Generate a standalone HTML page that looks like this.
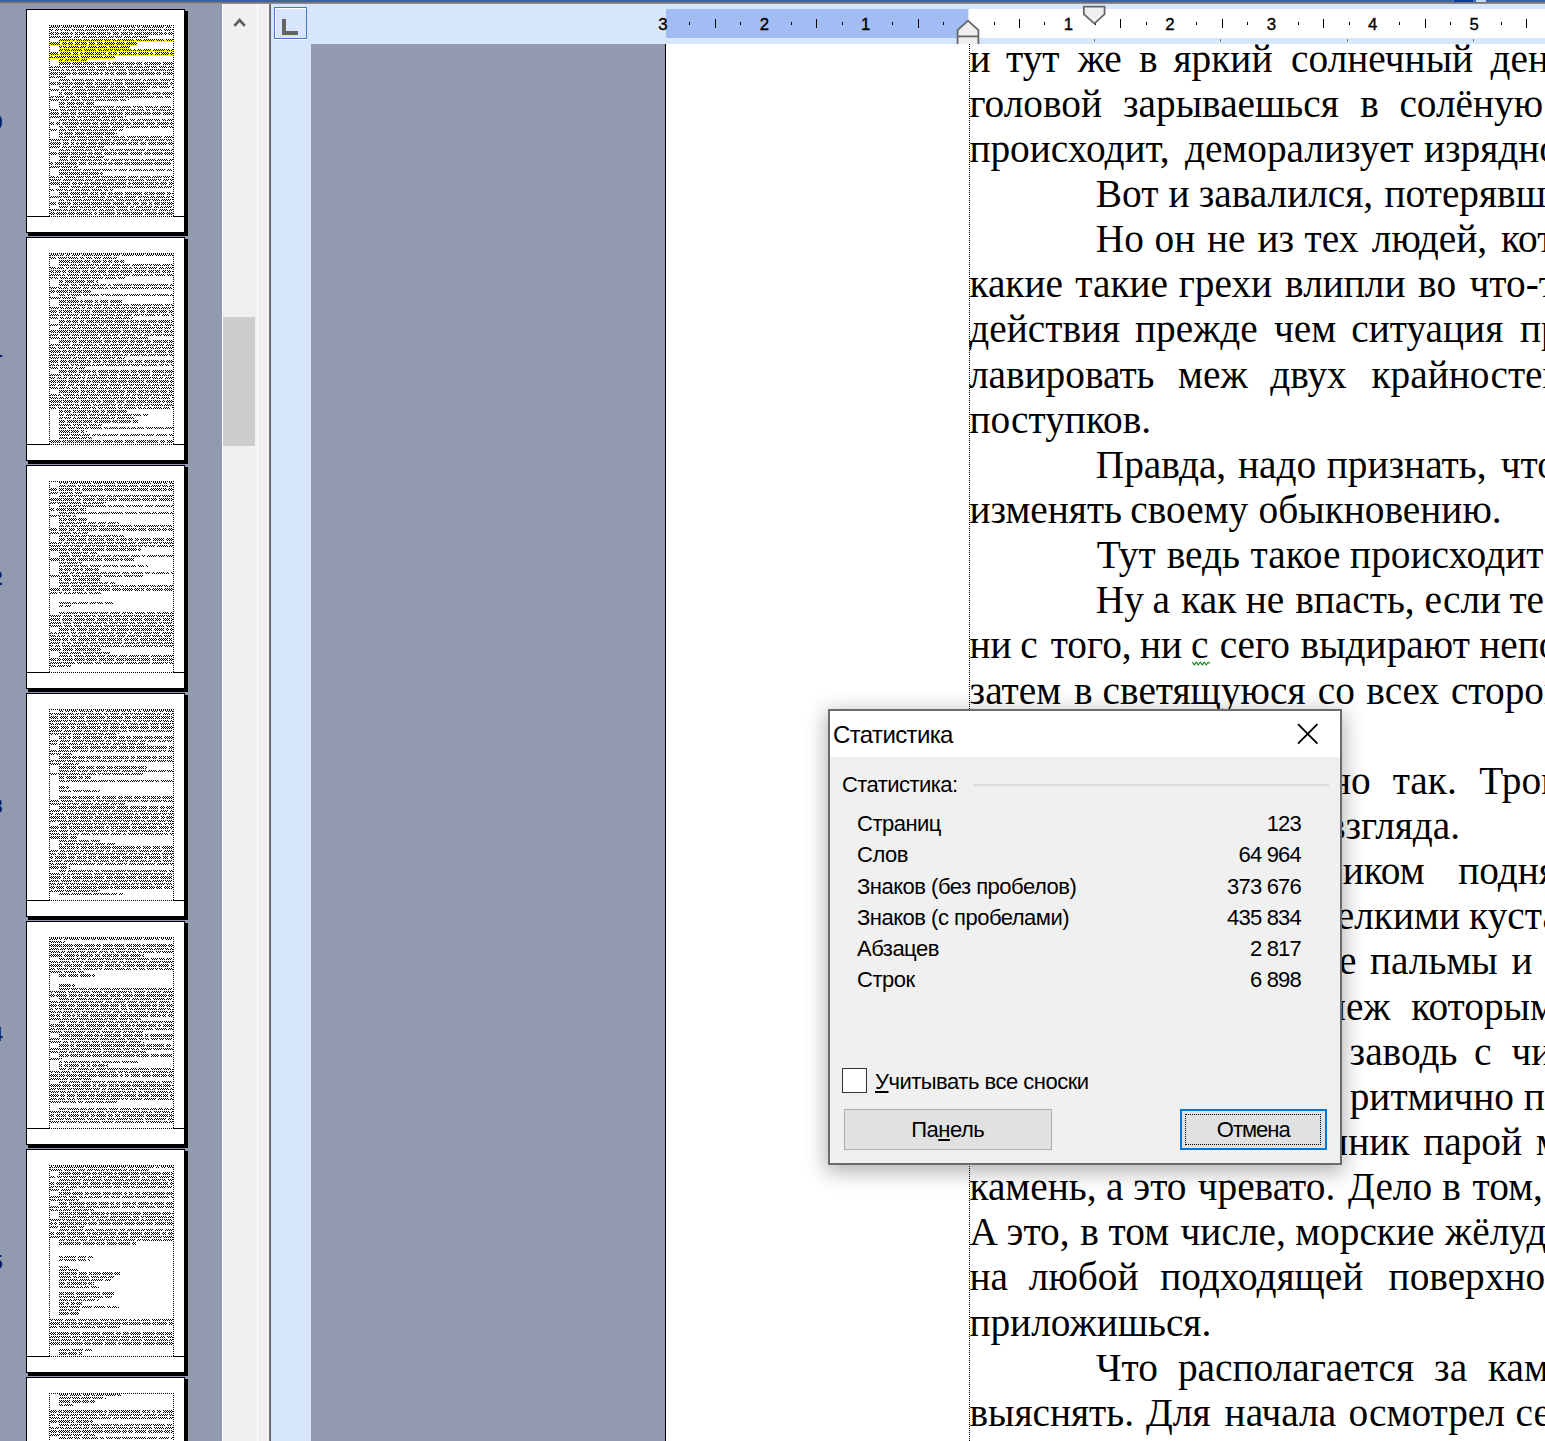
<!DOCTYPE html>
<html lang="ru">
<head>
<meta charset="utf-8">
<title>Статистика</title>
<style>
html,body{margin:0;padding:0}
body{width:1545px;height:1441px;position:relative;overflow:hidden;background:#fff;font-family:"Liberation Sans",sans-serif}
.abs{position:absolute}
#topbar{left:0;top:0;width:1545px;height:2px;background:#3d62a1}
#topline{left:0;top:2px;width:1545px;height:2px;background:linear-gradient(#6e6a68,#9a9896)}
#leftpane{left:0;top:4px;width:222px;height:1437px;background:#929aaf}
#vscroll{left:222px;top:4px;width:36px;height:1437px;background:#f0f0f0;border-left:1px solid #fff;box-sizing:border-box}
#vthumb{left:223px;top:317px;width:32px;height:129px;background:#cdcdcd}
#split{left:257px;top:4px;width:12px;height:1437px;background:#f0f0f0;border-left:1px solid #fff;box-sizing:border-box}
#splitline{left:269px;top:4px;width:2px;height:1437px;background:linear-gradient(to right,#8b8b8b,#555)}
#rulerbg{left:271px;top:4px;width:1274px;height:1437px;background:#d8e6fc}
#docbg{left:311px;top:44px;width:355px;height:1397px;background:#929aaf}
#page{left:665px;top:44px;width:880px;height:1397px;background:#fff;border-left:1px solid #000;box-sizing:border-box}
#rband{left:666px;top:9px;width:302px;height:29px;background:#a1bdf4}
#rwhite{left:969px;top:9px;width:576px;height:29px;background:#fff}
#tabsel{left:274px;top:7px;width:33px;height:32px;box-sizing:border-box;border:1px solid #4a78c8;box-shadow:inset 1px 1px 0 #fff,0 1px 0 #fff}
#textedge{left:969px;top:44px;width:1px;height:1397px;background:repeating-linear-gradient(to bottom,#000 0,#000 1px,#fff 1px,#fff 2px)}
svg{position:absolute;left:0;top:0;overflow:visible}
.rn{font-family:"Liberation Sans",sans-serif;font-size:16.8px;fill:#000;stroke:#000;stroke-width:.35px}
.ln{position:absolute;left:0;width:1545px;height:45.1px;white-space:pre;font-family:"Liberation Serif",serif;font-size:39.35px;line-height:45.1px;color:#000}
.ln span{position:absolute;top:0}
.pgn{position:absolute;left:-57.4px;width:60px;text-align:right;font-size:20px;line-height:24px;color:#0a1a5c;font-weight:bold}
/* dialog */
#dlg>*{margin:-.5px 0 0 -.5px}
#dlg{left:828px;top:709px;width:514px;height:456px;box-sizing:border-box;border:2px solid #6b6b6b;background:#f0f0f0;box-shadow:0 5px 20px 2px rgba(0,0,0,.3);font-size:22px;letter-spacing:-.5px;color:#000}
#dlg .title{position:absolute;left:0;top:0;right:0;height:46.5px;background:#fff}
#dlg .title span{position:absolute;left:3.5px;top:9.4px;font-size:24px;line-height:30px;letter-spacing:-.62px}
#dlg .grp{position:absolute;left:12.5px;top:60.3px;line-height:28px;letter-spacing:-.55px}
#dlg .sep{position:absolute;left:143px;top:73.5px;width:356px;height:1.5px;background:#dcdcdc}
#dlg .row{position:absolute;left:27.5px;width:444px;height:30px;line-height:30px;white-space:pre}
#dlg .row i{font-style:normal;position:absolute;right:0;top:0;letter-spacing:-.8px}
#dlg .cb{position:absolute;left:12.5px;top:357.3px;width:25px;height:25px;box-sizing:border-box;border:1.5px solid #333;background:#fff}
#dlg .cbl{position:absolute;left:45.5px;top:356px;line-height:30px;white-space:pre}
#dlg .btn{position:absolute;top:398px;height:41px;box-sizing:border-box;background:#e1e1e1;border:1px solid #adadad;text-align:center;line-height:40px}
#dlg .b1{left:14.5px;width:207.5px}
#dlg .b2{left:350.5px;width:146.5px;border:2px solid #0078d7;line-height:38px;letter-spacing:-1px}
#dlg .b2:after{content:"";position:absolute;left:3px;top:3px;right:3.5px;bottom:3px;border:1px dotted #000}
u{text-decoration:underline;text-underline-offset:2px;text-decoration-thickness:1.5px}
</style>
</head>
<body>
<div id="topbar" class="abs"></div>
<div id="topline" class="abs"></div>
<div class="abs" style="left:1452px;top:0;width:23px;height:2px;background:#0b3a97;border-left:2px solid #3f73c9;border-right:2px solid #3f73c9;box-sizing:border-box"></div>
<div class="abs" style="left:1476px;top:0;width:10px;height:2px;background:#c3d9f8"></div>
<div id="leftpane" class="abs"></div>
<div class="pgn" style="top:110px">110</div>
<div class="pgn" style="top:338px">111</div>
<div class="pgn" style="top:566px">112</div>
<div class="pgn" style="top:794px">113</div>
<div class="pgn" style="top:1022px">114</div>
<div class="pgn" style="top:1250px">115</div>
<div id="vscroll" class="abs"></div>
<div id="vthumb" class="abs"></div>
<div id="split" class="abs"></div>
<div id="splitline" class="abs"></div>
<div id="rulerbg" class="abs"></div>
<div id="docbg" class="abs"></div>
<div id="page" class="abs"></div>
<div id="rband" class="abs"></div>
<div id="rwhite" class="abs"></div>
<div id="tabsel" class="abs"></div>
<div id="textedge" class="abs"></div>
<svg width="1545" height="1441" viewBox="0 0 1545 1441">
<defs>
<pattern id="dt" width="2" height="2" patternUnits="userSpaceOnUse"><rect x="0" y="0" width="1" height="1" fill="#000"/><rect x="1" y="1" width="1" height="1" fill="#000"/></pattern>
</defs>
<!-- scrollbar up arrow -->
<path d="M234.4 25.8 L239.6 20 L244.8 25.8" fill="none" stroke="#5f5f5f" stroke-width="2.7"/>
<!-- tab selector L -->
<path d="M284 19 V33 H298" fill="none" stroke="#646464" stroke-width="4"/>
<rect x="689" y="22" width="1" height="3" fill="#000"/>
<rect x="715" y="19" width="1" height="9" fill="#000"/>
<rect x="740" y="22" width="1" height="3" fill="#000"/>
<rect x="791" y="22" width="1" height="3" fill="#000"/>
<rect x="816" y="19" width="1" height="9" fill="#000"/>
<rect x="842" y="22" width="1" height="3" fill="#000"/>
<rect x="892" y="22" width="1" height="3" fill="#000"/>
<rect x="918" y="19" width="1" height="9" fill="#000"/>
<rect x="943" y="22" width="1" height="3" fill="#000"/>
<rect x="994" y="22" width="1" height="3" fill="#000"/>
<rect x="1019" y="19" width="1" height="9" fill="#000"/>
<rect x="1044" y="22" width="1" height="3" fill="#000"/>
<rect x="1095" y="22" width="1" height="3" fill="#000"/>
<rect x="1120" y="19" width="1" height="9" fill="#000"/>
<rect x="1146" y="22" width="1" height="3" fill="#000"/>
<rect x="1196" y="22" width="1" height="3" fill="#000"/>
<rect x="1222" y="19" width="1" height="9" fill="#000"/>
<rect x="1247" y="22" width="1" height="3" fill="#000"/>
<rect x="1298" y="22" width="1" height="3" fill="#000"/>
<rect x="1323" y="19" width="1" height="9" fill="#000"/>
<rect x="1349" y="22" width="1" height="3" fill="#000"/>
<rect x="1399" y="22" width="1" height="3" fill="#000"/>
<rect x="1425" y="19" width="1" height="9" fill="#000"/>
<rect x="1450" y="22" width="1" height="3" fill="#000"/>
<rect x="1501" y="22" width="1" height="3" fill="#000"/>
<rect x="1526" y="19" width="1" height="9" fill="#000"/>
<text x="662.9" y="30.3" text-anchor="middle" class="rn">3</text>
<text x="764.3" y="30.3" text-anchor="middle" class="rn">2</text>
<text x="865.7" y="30.3" text-anchor="middle" class="rn">1</text>
<text x="1068.5" y="30.3" text-anchor="middle" class="rn">1</text>
<text x="1169.9" y="30.3" text-anchor="middle" class="rn">2</text>
<text x="1271.3" y="30.3" text-anchor="middle" class="rn">3</text>
<text x="1372.7" y="30.3" text-anchor="middle" class="rn">4</text>
<text x="1474.1" y="30.3" text-anchor="middle" class="rn">5</text>
<rect x="1094" y="39" width="1" height="3" fill="#7d7d7d"/>
<rect x="1220" y="39" width="1" height="3" fill="#7d7d7d"/>
<rect x="1347" y="39" width="1" height="3" fill="#7d7d7d"/>
<rect x="1473" y="39" width="1" height="3" fill="#7d7d7d"/>
<!-- first-line indent marker -->
<path d="M1083.8 6.6 H1104.6 V14.2 L1094.4 23.6 L1083.8 14.2 Z" fill="#efefef" stroke="#666" stroke-width="1.8"/>
<!-- hanging indent + left indent marker -->
<path d="M957.6 44 V30.2 L968 20.6 L978.4 30.2 V44" fill="#efefef" stroke="#666" stroke-width="1.8"/>
<path d="M957.6 36.4 H978.4" stroke="#666" stroke-width="1.8"/>
<g transform="translate(26,9)">
<rect x="2" y="2" width="160" height="225" fill="#000"/>
<rect x="0.5" y="0.5" width="158" height="223" fill="#fff" stroke="#000" stroke-width="1"/>
<rect x="0" y="207" width="24" height="1" fill="#000"/><rect x="147" y="207" width="12" height="1" fill="#000"/>
<path d="M23 16.5H148M23 207.5H148M23.5 16V208M147.5 16V208" fill="none" stroke="#000" stroke-width="1" stroke-dasharray="1 1"/>
<path d="M33 31h114v2h-114zM24 35h87v2h-87zM33 38h71v2h-71zM33 41h114v2h-114zM24 45h123v2h-123zM24 48h65v2h-65zM33 51h28v2h-28z" fill="#ff0"/>
<path d="M24 17h10v2h-10zM36 17h10v2h-10zM47 17h11v2h-11zM60 17h6v2h-6zM67 17h11v2h-11zM79 17h12v2h-12zM92 17h4v2h-4zM97 17h7v2h-7zM105 17h4v2h-4zM111 17h3v2h-3zM116 17h9v2h-9zM126 17h12v2h-12zM140 17h5v2h-5zM24 20h3v2h-3zM29 20h4v2h-4zM34 20h3v2h-3zM38 20h6v2h-6zM46 20h3v2h-3zM50 20h8v2h-8zM59 20h12v2h-12zM72 20h11v2h-11zM84 20h7v2h-7zM92 20h3v2h-3zM97 20h4v2h-4zM102 20h7v2h-7zM110 20h11v2h-11zM122 20h7v2h-7zM130 20h6v2h-6zM138 20h7v2h-7zM146 20h1v2h-1zM24 23h4v3h-4zM29 23h4v3h-4zM34 23h9v3h-9zM44 23h3v3h-3zM49 23h3v3h-3zM53 23h6v3h-6zM60 23h10v3h-10zM71 23h9v3h-9zM81 23h4v3h-4zM87 23h6v3h-6zM95 23h7v3h-7zM103 23h4v3h-4zM108 23h8v3h-8zM117 23h9v3h-9zM127 23h5v3h-5zM133 23h4v3h-4zM138 23h3v3h-3zM142 23h5v3h-5zM24 27h11v2h-11zM36 27h10v2h-10zM48 27h6v2h-6zM56 27h5v2h-5zM62 27h9v2h-9zM72 27h9v2h-9zM82 27h6v2h-6zM89 27h7v2h-7zM98 27h7v2h-7zM106 27h6v2h-6zM113 27h9v2h-9zM33 30h12v2h-12zM46 30h3v2h-3zM50 30h6v2h-6zM57 30h7v2h-7zM65 30h12v2h-12zM78 30h7v2h-7zM86 30h4v2h-4zM91 30h4v2h-4zM96 30h12v2h-12zM110 30h6v2h-6zM117 30h12v2h-12zM130 30h8v2h-8zM140 30h7v2h-7zM24 33h10v3h-10zM36 33h5v3h-5zM42 33h5v3h-5zM49 33h5v3h-5zM55 33h6v3h-6zM63 33h6v3h-6zM71 33h6v3h-6zM78 33h11v3h-11zM90 33h9v3h-9zM100 33h11v3h-11zM33 37h3v2h-3zM37 37h4v2h-4zM42 37h11v2h-11zM54 37h6v2h-6zM62 37h9v2h-9zM72 37h9v2h-9zM83 37h10v2h-10zM94 37h10v2h-10zM33 40h4v2h-4zM38 40h6v2h-6zM45 40h11v2h-11zM58 40h12v2h-12zM72 40h4v2h-4zM77 40h6v2h-6zM84 40h3v2h-3zM88 40h7v2h-7zM96 40h10v2h-10zM107 40h3v2h-3zM111 40h5v2h-5zM117 40h8v2h-8zM127 40h12v2h-12zM140 40h4v2h-4zM145 40h2v2h-2zM24 43h8v3h-8zM34 43h11v3h-11zM47 43h5v3h-5zM54 43h3v3h-3zM58 43h10v3h-10zM69 43h7v3h-7zM77 43h3v3h-3zM82 43h4v3h-4zM87 43h4v3h-4zM93 43h7v3h-7zM101 43h5v3h-5zM107 43h4v3h-4zM112 43h11v3h-11zM124 43h3v3h-3zM129 43h5v3h-5zM135 43h8v3h-8zM144 43h3v3h-3zM24 47h3v2h-3zM28 47h12v2h-12zM41 47h12v2h-12zM55 47h9v2h-9zM65 47h12v2h-12zM78 47h11v2h-11zM33 50h4v2h-4zM39 50h4v2h-4zM44 50h9v2h-9zM55 50h6v2h-6zM33 53h12v3h-12zM46 53h10v3h-10zM57 53h11v3h-11zM69 53h11v3h-11zM82 53h3v3h-3zM86 53h12v3h-12zM99 53h10v3h-10zM110 53h6v3h-6zM118 53h4v3h-4zM123 53h12v3h-12zM137 53h10v3h-10zM24 57h3v2h-3zM28 57h7v2h-7zM36 57h12v2h-12zM49 57h11v2h-11zM61 57h8v2h-8zM71 57h10v2h-10zM82 57h6v2h-6zM89 57h9v2h-9zM100 57h7v2h-7zM108 57h9v2h-9zM118 57h6v2h-6zM125 57h6v2h-6zM133 57h8v2h-8zM142 57h5v2h-5zM24 60h10v2h-10zM35 60h3v2h-3zM40 60h4v2h-4zM45 60h5v2h-5zM51 60h10v2h-10zM62 60h7v2h-7zM70 60h9v2h-9zM80 60h11v2h-11zM92 60h8v2h-8zM102 60h12v2h-12zM115 60h8v2h-8zM124 60h3v2h-3zM128 60h12v2h-12zM141 60h6v2h-6zM24 63h8v3h-8zM33 63h12v3h-12zM46 63h5v3h-5zM52 63h10v3h-10zM63 63h3v3h-3zM67 63h6v3h-6zM74 63h3v3h-3zM79 63h4v3h-4zM84 63h4v3h-4zM90 63h11v3h-11zM103 63h8v3h-8zM112 63h6v3h-6zM119 63h10v3h-10zM130 63h5v3h-5zM137 63h3v3h-3zM141 63h6v3h-6zM24 67h5v2h-5zM30 67h7v2h-7zM38 67h2v2h-2zM33 70h11v2h-11zM46 70h12v2h-12zM59 70h9v2h-9zM70 70h6v2h-6zM77 70h9v2h-9zM88 70h9v2h-9zM98 70h10v2h-10zM109 70h6v2h-6zM117 70h3v2h-3zM121 70h11v2h-11zM134 70h11v2h-11zM146 70h1v2h-1zM24 73h6v3h-6zM31 73h4v3h-4zM36 73h6v3h-6zM43 73h4v3h-4zM48 73h11v3h-11zM60 73h7v3h-7zM69 73h3v3h-3zM73 73h11v3h-11zM85 73h3v3h-3zM89 73h8v3h-8zM99 73h9v3h-9zM109 73h10v3h-10zM120 73h6v3h-6zM127 73h9v3h-9zM137 73h5v3h-5zM144 73h3v3h-3zM33 77h5v2h-5zM39 77h5v2h-5zM46 77h11v2h-11zM59 77h10v2h-10zM70 77h12v2h-12zM84 77h4v2h-4zM89 77h10v2h-10zM101 77h11v2h-11zM113 77h11v2h-11zM126 77h5v2h-5zM133 77h11v2h-11zM146 77h1v2h-1zM24 80h9v2h-9zM35 80h6v2h-6zM42 80h5v2h-5zM49 80h11v2h-11zM61 80h12v2h-12zM74 80h6v2h-6zM81 80h11v2h-11zM93 80h11v2h-11zM105 80h12v2h-12zM118 80h3v2h-3zM33 83h3v3h-3zM38 83h9v3h-9zM49 83h12v3h-12zM62 83h10v3h-10zM73 83h5v3h-5zM79 83h11v3h-11zM91 83h9v3h-9zM101 83h7v3h-7zM109 83h10v3h-10zM120 83h5v3h-5zM126 83h9v3h-9zM136 83h11v3h-11zM24 87h4v2h-4zM29 87h9v2h-9zM40 87h3v2h-3zM44 87h5v2h-5zM51 87h3v2h-3zM55 87h6v2h-6zM62 87h6v2h-6zM69 87h7v2h-7zM77 87h8v2h-8zM86 87h12v2h-12zM99 87h4v2h-4zM104 87h12v2h-12zM117 87h11v2h-11zM130 87h7v2h-7zM139 87h6v2h-6zM24 90h9v2h-9zM34 90h9v2h-9zM45 90h9v2h-9zM56 90h12v2h-12zM69 90h11v2h-11zM81 90h11v2h-11zM94 90h6v2h-6zM102 90h1v2h-1zM33 93h6v3h-6zM41 93h8v3h-8zM50 93h8v3h-8zM60 93h8v3h-8zM33 97h6v2h-6zM40 97h4v2h-4zM45 97h6v2h-6zM52 97h4v2h-4zM57 97h9v2h-9zM67 97h9v2h-9zM77 97h11v2h-11zM90 97h5v2h-5zM96 97h9v2h-9zM107 97h3v2h-3zM111 97h6v2h-6zM119 97h8v2h-8zM128 97h4v2h-4zM134 97h11v2h-11zM24 100h8v2h-8zM34 100h6v2h-6zM41 100h10v2h-10zM52 100h3v2h-3zM56 100h11v2h-11zM69 100h11v2h-11zM82 100h10v2h-10zM93 100h6v2h-6zM100 100h4v2h-4zM105 100h5v2h-5zM111 100h7v2h-7zM120 100h4v2h-4zM126 100h3v2h-3zM130 100h10v2h-10zM141 100h4v2h-4zM146 100h1v2h-1zM24 103h9v3h-9zM35 103h8v3h-8zM44 103h6v3h-6zM52 103h8v3h-8zM61 103h3v3h-3zM65 103h5v3h-5zM71 103h10v3h-10zM82 103h8v3h-8zM91 103h6v3h-6zM99 103h5v3h-5zM105 103h11v3h-11zM117 103h8v3h-8zM126 103h9v3h-9zM137 103h10v3h-10zM24 107h12v2h-12zM37 107h7v2h-7zM45 107h4v2h-4zM51 107h5v2h-5zM57 107h5v2h-5zM63 107h11v2h-11zM76 107h8v2h-8zM85 107h5v2h-5zM91 107h6v2h-6zM99 107h1v2h-1zM33 110h8v2h-8zM42 110h10v2h-10zM53 110h3v2h-3zM57 110h12v2h-12zM70 110h6v2h-6zM77 110h7v2h-7zM85 110h6v2h-6zM93 110h9v2h-9zM104 110h5v2h-5zM111 110h4v2h-4zM116 110h11v2h-11zM128 110h6v2h-6zM136 110h4v2h-4zM141 110h6v2h-6zM24 113h4v3h-4zM30 113h4v3h-4zM36 113h6v3h-6zM43 113h10v3h-10zM54 113h11v3h-11zM66 113h6v3h-6zM74 113h9v3h-9zM84 113h4v3h-4zM89 113h7v3h-7zM97 113h8v3h-8zM107 113h11v3h-11zM120 113h9v3h-9zM131 113h12v3h-12zM144 113h3v3h-3zM33 117h4v2h-4zM39 117h12v2h-12zM53 117h3v2h-3zM57 117h5v2h-5zM63 117h10v2h-10zM74 117h10v2h-10zM86 117h12v2h-12zM100 117h3v2h-3zM104 117h10v2h-10zM115 117h7v2h-7zM124 117h9v2h-9zM135 117h7v2h-7zM143 117h4v2h-4zM24 120h7v2h-7zM33 120h7v2h-7zM42 120h7v2h-7zM50 120h3v2h-3zM54 120h12v2h-12zM67 120h5v2h-5zM73 120h9v2h-9zM83 120h8v2h-8zM93 120h4v2h-4zM33 123h4v3h-4zM38 123h9v3h-9zM49 123h10v3h-10zM60 123h6v3h-6zM67 123h11v3h-11zM79 123h10v3h-10zM90 123h1v3h-1zM33 127h4v2h-4zM38 127h12v2h-12zM51 127h10v2h-10zM62 127h6v2h-6zM69 127h8v2h-8zM79 127h5v2h-5zM85 127h8v2h-8zM94 127h5v2h-5zM101 127h9v2h-9zM111 127h12v2h-12zM124 127h12v2h-12zM138 127h9v2h-9zM24 130h11v2h-11zM36 130h7v2h-7zM45 130h5v2h-5zM51 130h10v2h-10zM62 130h11v2h-11zM74 130h11v2h-11zM87 130h8v2h-8zM96 130h7v2h-7zM105 130h12v2h-12zM119 130h12v2h-12zM132 130h7v2h-7zM140 130h6v2h-6zM24 133h11v3h-11zM37 133h6v3h-6zM45 133h3v3h-3zM50 133h3v3h-3zM54 133h7v3h-7zM62 133h9v3h-9zM72 133h12v3h-12zM85 133h4v3h-4zM90 133h11v3h-11zM102 133h4v3h-4zM107 133h5v3h-5zM114 133h6v3h-6zM122 133h8v3h-8zM131 133h10v3h-10zM142 133h5v3h-5zM24 137h10v2h-10zM36 137h5v2h-5zM42 137h4v2h-4zM47 137h12v2h-12zM60 137h10v2h-10zM71 137h7v2h-7zM33 140h5v2h-5zM39 140h5v2h-5zM46 140h12v2h-12zM59 140h7v2h-7zM68 140h5v2h-5zM74 140h8v2h-8zM84 140h4v2h-4zM89 140h8v2h-8zM98 140h11v2h-11zM110 140h9v2h-9zM121 140h12v2h-12zM134 140h10v2h-10zM145 140h2v2h-2zM24 143h7v3h-7zM32 143h12v3h-12zM45 143h7v3h-7zM53 143h8v3h-8zM62 143h5v3h-5zM68 143h8v3h-8zM78 143h8v3h-8zM87 143h4v3h-4zM92 143h10v3h-10zM104 143h12v3h-12zM118 143h7v3h-7zM126 143h11v3h-11zM138 143h9v3h-9zM33 147h9v2h-9zM44 147h11v2h-11zM56 147h4v2h-4zM61 147h8v2h-8zM70 147h8v2h-8zM33 150h9v2h-9zM44 150h9v2h-9zM54 150h12v2h-12zM67 150h9v2h-9zM78 150h5v2h-5zM85 150h12v2h-12zM98 150h5v2h-5zM104 150h10v2h-10zM115 150h3v2h-3zM119 150h11v2h-11zM131 150h11v2h-11zM143 150h4v2h-4zM24 153h3v3h-3zM29 153h9v3h-9zM39 153h12v3h-12zM53 153h7v3h-7zM62 153h4v3h-4zM67 153h4v3h-4zM72 153h4v3h-4zM77 153h4v3h-4zM82 153h5v3h-5zM88 153h9v3h-9zM98 153h6v3h-6zM105 153h11v3h-11zM117 153h10v3h-10zM128 153h8v3h-8zM137 153h8v3h-8zM24 157h10v2h-10zM35 157h11v2h-11zM48 157h4v2h-4zM33 160h12v2h-12zM46 160h9v2h-9zM57 160h8v2h-8zM66 160h9v2h-9zM76 160h10v2h-10zM88 160h3v2h-3zM93 160h8v2h-8zM103 160h3v2h-3zM107 160h9v2h-9zM117 160h5v2h-5zM123 160h5v2h-5zM130 160h9v2h-9zM141 160h5v2h-5zM33 163h9v3h-9zM43 163h11v3h-11zM55 163h7v3h-7zM63 163h10v3h-10zM74 163h3v3h-3zM24 167h5v2h-5zM30 167h3v2h-3zM34 167h3v2h-3zM39 167h10v2h-10zM50 167h8v2h-8zM59 167h6v2h-6zM66 167h8v2h-8zM75 167h12v2h-12zM88 167h12v2h-12zM102 167h10v2h-10zM114 167h11v2h-11zM126 167h10v2h-10zM137 167h7v2h-7zM145 167h2v2h-2zM24 170h11v2h-11zM37 170h10v2h-10zM48 170h10v2h-10zM59 170h8v2h-8zM69 170h11v2h-11zM81 170h10v2h-10zM92 170h9v2h-9zM102 170h6v2h-6zM109 170h9v2h-9zM120 170h11v2h-11zM132 170h3v2h-3zM137 170h6v2h-6zM144 170h3v2h-3zM24 173h10v3h-10zM35 173h9v3h-9zM46 173h5v3h-5zM52 173h5v3h-5zM58 173h5v3h-5zM64 173h11v3h-11zM76 173h12v3h-12zM89 173h11v3h-11zM102 173h3v3h-3zM106 173h12v3h-12zM119 173h3v3h-3zM123 173h5v3h-5zM129 173h4v3h-4zM134 173h7v3h-7zM143 173h4v3h-4zM33 177h10v2h-10zM45 177h10v2h-10zM56 177h12v2h-12zM70 177h11v2h-11zM82 177h3v2h-3zM86 177h9v2h-9zM96 177h4v2h-4zM101 177h6v2h-6zM108 177h11v2h-11zM120 177h11v2h-11zM132 177h5v2h-5zM138 177h8v2h-8zM24 180h4v2h-4zM30 180h7v2h-7zM38 180h4v2h-4zM43 180h4v2h-4zM49 180h5v2h-5zM55 180h9v2h-9zM66 180h10v2h-10zM78 180h4v2h-4zM84 180h3v2h-3zM33 183h9v3h-9zM44 183h10v3h-10zM55 183h7v3h-7zM64 183h4v3h-4zM69 183h3v3h-3zM74 183h6v3h-6zM82 183h5v3h-5zM88 183h9v3h-9zM99 183h7v3h-7zM107 183h9v3h-9zM118 183h4v3h-4zM123 183h6v3h-6zM130 183h9v3h-9zM141 183h4v3h-4zM146 183h1v3h-1zM24 187h12v2h-12zM37 187h8v2h-8zM46 187h9v2h-9zM56 187h4v2h-4zM61 187h12v2h-12zM74 187h5v2h-5zM81 187h5v2h-5zM87 187h6v2h-6zM94 187h3v2h-3zM98 187h12v2h-12zM112 187h4v2h-4zM117 187h6v2h-6zM124 187h5v2h-5zM130 187h9v2h-9zM140 187h4v2h-4zM145 187h2v2h-2zM33 190h5v2h-5zM40 190h6v2h-6zM47 190h9v2h-9zM57 190h8v2h-8zM66 190h12v2h-12zM79 190h9v2h-9zM90 190h8v2h-8zM99 190h12v2h-12zM113 190h3v2h-3zM117 190h8v2h-8zM126 190h8v2h-8zM135 190h10v2h-10zM146 190h1v2h-1zM24 193h6v3h-6zM32 193h8v3h-8zM41 193h4v3h-4zM47 193h5v3h-5zM53 193h11v3h-11zM65 193h11v3h-11zM77 193h8v3h-8zM87 193h11v3h-11zM100 193h5v3h-5zM107 193h6v3h-6zM115 193h6v3h-6zM123 193h3v3h-3zM128 193h6v3h-6zM135 193h5v3h-5zM141 193h6v3h-6zM33 197h9v2h-9zM44 197h8v2h-8zM53 197h4v2h-4zM58 197h7v2h-7zM66 197h4v2h-4zM71 197h5v2h-5zM77 197h12v2h-12zM91 197h11v2h-11zM104 197h4v2h-4zM110 197h7v2h-7zM118 197h8v2h-8zM128 197h5v2h-5zM134 197h3v2h-3zM138 197h8v2h-8zM24 200h12v2h-12zM37 200h5v2h-5zM43 200h12v2h-12zM57 200h4v2h-4zM62 200h3v2h-3zM66 200h5v2h-5zM73 200h5v2h-5zM79 200h9v2h-9zM90 200h12v2h-12zM104 200h3v2h-3zM108 200h6v2h-6zM115 200h10v2h-10zM126 200h5v2h-5zM133 200h9v2h-9zM143 200h4v2h-4zM24 203h5v3h-5zM30 203h11v3h-11zM42 203h7v3h-7zM50 203h12v3h-12zM63 203h3v3h-3zM68 203h3v3h-3zM73 203h5v3h-5zM79 203h10v3h-10zM91 203h4v3h-4zM96 203h8v3h-8zM105 203h12v3h-12zM119 203h12v3h-12zM132 203h7v3h-7zM140 203h7v3h-7z" fill="url(#dt)"/>
</g>
<g transform="translate(26,237)">
<rect x="2" y="2" width="160" height="225" fill="#000"/>
<rect x="0.5" y="0.5" width="158" height="223" fill="#fff" stroke="#000" stroke-width="1"/>
<rect x="0" y="207" width="24" height="1" fill="#000"/><rect x="147" y="207" width="12" height="1" fill="#000"/>
<path d="M23 16.5H148M23 207.5H148M23.5 16V208M147.5 16V208" fill="none" stroke="#000" stroke-width="1" stroke-dasharray="1 1"/>
<path d="M24 17h9v2h-9zM34 17h4v2h-4zM40 17h4v2h-4zM46 17h8v2h-8zM56 17h11v2h-11zM68 17h9v2h-9zM78 17h8v2h-8zM87 17h7v2h-7zM96 17h12v2h-12zM109 17h9v2h-9zM120 17h8v2h-8zM129 17h12v2h-12zM142 17h5v2h-5zM24 20h6v2h-6zM32 20h9v2h-9zM42 20h10v2h-10zM54 20h4v2h-4zM60 20h6v2h-6zM68 20h7v2h-7zM77 20h9v2h-9zM87 20h4v2h-4zM33 23h11v3h-11zM45 23h12v3h-12zM58 23h6v3h-6zM66 23h9v3h-9zM77 23h4v3h-4zM82 23h4v3h-4zM88 23h5v3h-5zM94 23h4v3h-4zM33 27h10v2h-10zM44 27h7v2h-7zM52 27h7v2h-7zM60 27h8v2h-8zM69 27h4v2h-4zM74 27h10v2h-10zM86 27h9v2h-9zM96 27h8v2h-8zM106 27h12v2h-12zM119 27h3v2h-3zM123 27h3v2h-3zM127 27h8v2h-8zM136 27h8v2h-8zM145 27h2v2h-2zM24 30h6v2h-6zM31 30h7v2h-7zM40 30h3v2h-3zM44 30h8v2h-8zM53 30h10v2h-10zM64 30h5v2h-5zM71 30h11v2h-11zM83 30h11v2h-11zM96 30h6v2h-6zM103 30h3v2h-3zM108 30h4v2h-4zM113 30h8v2h-8zM122 30h9v2h-9zM133 30h5v2h-5zM139 30h8v2h-8zM24 33h4v3h-4zM29 33h6v3h-6zM36 33h4v3h-4zM42 33h6v3h-6zM49 33h5v3h-5zM56 33h6v3h-6zM64 33h7v3h-7zM72 33h8v3h-8zM82 33h11v3h-11zM94 33h12v3h-12zM108 33h6v3h-6zM115 33h5v3h-5zM122 33h6v3h-6zM129 33h5v3h-5zM136 33h4v3h-4zM141 33h4v3h-4zM146 33h1v3h-1zM24 37h11v2h-11zM36 37h3v2h-3zM41 37h12v2h-12zM54 37h11v2h-11zM66 37h9v2h-9zM77 37h4v2h-4zM82 37h7v2h-7zM90 37h6v2h-6zM97 37h7v2h-7zM106 37h11v2h-11zM118 37h5v2h-5zM124 37h3v2h-3zM129 37h10v2h-10zM141 37h6v2h-6zM24 40h3v2h-3zM28 40h4v2h-4zM34 40h8v2h-8zM43 40h10v2h-10zM54 40h11v2h-11zM66 40h11v2h-11zM79 40h11v2h-11zM92 40h7v2h-7zM33 43h4v3h-4zM39 43h9v3h-9zM49 43h10v3h-10zM61 43h7v3h-7zM70 43h2v3h-2zM33 47h10v2h-10zM45 47h6v2h-6zM53 47h12v2h-12zM66 47h7v2h-7zM74 47h6v2h-6zM82 47h3v2h-3zM87 47h10v2h-10zM98 47h8v2h-8zM107 47h12v2h-12zM120 47h12v2h-12zM133 47h9v2h-9zM144 47h3v2h-3zM24 50h7v2h-7zM32 50h4v2h-4zM37 50h5v2h-5zM44 50h11v2h-11zM57 50h6v2h-6zM65 50h5v2h-5zM71 50h7v2h-7zM79 50h3v2h-3zM84 50h8v2h-8zM94 50h11v2h-11zM106 50h12v2h-12zM119 50h4v2h-4zM125 50h11v2h-11zM137 50h9v2h-9zM24 53h5v3h-5zM30 53h12v3h-12zM43 53h3v3h-3zM47 53h9v3h-9zM57 53h8v3h-8zM33 57h6v2h-6zM41 57h3v2h-3zM45 57h10v2h-10zM57 57h5v2h-5zM63 57h10v2h-10zM75 57h3v2h-3zM79 57h6v2h-6zM86 57h11v2h-11zM98 57h4v2h-4zM103 57h11v2h-11zM115 57h10v2h-10zM126 57h4v2h-4zM131 57h12v2h-12zM144 57h3v2h-3zM24 60h11v2h-11zM36 60h9v2h-9zM46 60h4v2h-4zM33 63h7v3h-7zM41 63h12v3h-12zM54 63h3v3h-3zM58 63h9v3h-9zM69 63h3v3h-3zM74 63h8v3h-8zM84 63h12v3h-12zM33 67h10v2h-10zM44 67h6v2h-6zM51 67h9v2h-9zM61 67h6v2h-6zM68 67h8v2h-8zM77 67h5v2h-5zM84 67h5v2h-5zM90 67h6v2h-6zM97 67h6v2h-6zM105 67h10v2h-10zM116 67h10v2h-10zM127 67h10v2h-10zM139 67h5v2h-5zM145 67h2v2h-2zM24 70h9v2h-9zM34 70h4v2h-4zM39 70h7v2h-7zM47 70h7v2h-7zM56 70h3v2h-3zM61 70h5v2h-5zM68 70h7v2h-7zM77 70h9v2h-9zM88 70h6v2h-6zM95 70h4v2h-4zM100 70h3v2h-3zM104 70h8v2h-8zM113 70h6v2h-6zM121 70h4v2h-4zM126 70h8v2h-8zM135 70h10v2h-10zM146 70h1v2h-1zM24 73h7v3h-7zM33 73h3v3h-3zM37 73h9v3h-9zM48 73h6v3h-6zM55 73h3v3h-3zM59 73h5v3h-5zM66 73h12v3h-12zM79 73h3v3h-3zM83 73h7v3h-7zM91 73h9v3h-9zM101 73h11v3h-11zM114 73h5v3h-5zM121 73h11v3h-11zM133 73h8v3h-8zM143 73h4v3h-4zM24 77h9v2h-9zM34 77h6v2h-6zM41 77h11v2h-11zM54 77h10v2h-10zM65 77h5v2h-5zM71 77h11v2h-11zM83 77h6v2h-6zM90 77h7v2h-7zM98 77h8v2h-8zM108 77h6v2h-6zM115 77h3v2h-3zM119 77h10v2h-10zM131 77h3v2h-3zM136 77h7v2h-7zM145 77h2v2h-2zM24 80h8v2h-8zM34 80h4v2h-4zM39 80h6v2h-6zM47 80h7v2h-7zM55 80h9v2h-9zM65 80h9v2h-9zM75 80h3v2h-3zM79 80h9v2h-9zM89 80h7v2h-7zM97 80h7v2h-7zM105 80h2v2h-2zM33 83h6v3h-6zM40 83h5v3h-5zM46 83h6v3h-6zM54 83h4v3h-4zM60 83h8v3h-8zM69 83h5v3h-5zM75 83h12v3h-12zM88 83h11v3h-11zM100 83h3v3h-3zM104 83h4v3h-4zM109 83h4v3h-4zM114 83h7v3h-7zM122 83h9v3h-9zM132 83h12v3h-12zM145 83h2v3h-2zM24 87h8v2h-8zM33 87h4v2h-4zM38 87h3v2h-3zM42 87h8v2h-8zM51 87h12v2h-12zM64 87h7v2h-7zM73 87h5v2h-5zM80 87h10v2h-10zM91 87h12v2h-12zM104 87h8v2h-8zM113 87h12v2h-12zM127 87h6v2h-6zM134 87h3v2h-3zM139 87h8v2h-8zM33 90h12v2h-12zM46 90h4v2h-4zM51 90h4v2h-4zM56 90h10v2h-10zM67 90h9v2h-9zM77 90h5v2h-5zM84 90h11v2h-11zM96 90h7v2h-7zM104 90h8v2h-8zM113 90h3v2h-3zM117 90h12v2h-12zM130 90h7v2h-7zM138 90h7v2h-7zM24 93h6v3h-6zM31 93h11v3h-11zM43 93h11v3h-11zM55 93h3v3h-3zM59 93h11v3h-11zM71 93h11v3h-11zM83 93h12v3h-12zM97 93h8v3h-8zM106 93h8v3h-8zM115 93h3v3h-3zM119 93h6v3h-6zM127 93h9v3h-9zM138 93h5v3h-5zM144 93h3v3h-3zM24 97h8v2h-8zM34 97h10v2h-10zM46 97h7v2h-7zM54 97h9v2h-9zM64 97h8v2h-8zM74 97h11v2h-11zM86 97h6v2h-6zM94 97h6v2h-6zM101 97h8v2h-8zM111 97h5v2h-5zM118 97h5v2h-5zM124 97h4v2h-4zM129 97h7v2h-7zM137 97h10v2h-10zM24 100h10v2h-10zM35 100h5v2h-5zM42 100h9v2h-9zM52 100h3v2h-3zM56 100h7v2h-7zM64 100h11v2h-11zM77 100h9v2h-9zM87 100h7v2h-7zM95 100h8v2h-8zM104 100h8v2h-8zM113 100h9v2h-9zM33 103h12v3h-12zM46 103h5v3h-5zM53 103h7v3h-7zM61 103h5v3h-5zM67 103h9v3h-9zM78 103h7v3h-7zM86 103h5v3h-5zM92 103h10v3h-10zM104 103h5v3h-5zM110 103h7v3h-7zM118 103h7v3h-7zM127 103h9v3h-9zM137 103h5v3h-5zM143 103h4v3h-4zM24 107h4v2h-4zM29 107h6v2h-6zM36 107h8v2h-8zM46 107h11v2h-11zM58 107h9v2h-9zM68 107h3v2h-3zM73 107h10v2h-10zM84 107h8v2h-8zM93 107h7v2h-7zM101 107h7v2h-7zM109 107h9v2h-9zM120 107h12v2h-12zM133 107h5v2h-5zM140 107h7v2h-7zM24 110h6v2h-6zM32 110h7v2h-7zM40 110h10v2h-10zM51 110h4v2h-4zM57 110h7v2h-7zM65 110h9v2h-9zM75 110h5v2h-5zM81 110h3v2h-3zM85 110h12v2h-12zM99 110h5v2h-5zM105 110h9v2h-9zM115 110h8v2h-8zM124 110h4v2h-4zM129 110h6v2h-6zM136 110h11v2h-11zM24 113h11v3h-11zM36 113h5v3h-5zM42 113h3v3h-3zM46 113h4v3h-4zM51 113h5v3h-5zM57 113h10v3h-10zM68 113h6v3h-6zM75 113h10v3h-10zM86 113h9v3h-9zM96 113h11v3h-11zM108 113h11v3h-11zM120 113h6v3h-6zM128 113h12v3h-12zM142 113h5v3h-5zM24 117h7v2h-7zM32 117h7v2h-7zM40 117h10v2h-10zM52 117h3v2h-3zM56 117h3v2h-3zM60 117h11v2h-11zM72 117h4v2h-4zM77 117h8v2h-8zM86 117h11v2h-11zM98 117h4v2h-4zM104 117h10v2h-10zM115 117h6v2h-6zM122 117h8v2h-8zM131 117h11v2h-11zM143 117h4v2h-4zM24 120h9v2h-9zM34 120h11v2h-11zM47 120h4v2h-4zM52 120h9v2h-9zM63 120h9v2h-9zM73 120h12v2h-12zM86 120h3v2h-3zM91 120h5v2h-5zM97 120h2v2h-2zM24 123h8v3h-8zM34 123h7v3h-7zM42 123h10v3h-10zM53 123h7v3h-7zM61 123h4v3h-4zM67 123h8v3h-8zM77 123h4v3h-4zM82 123h8v3h-8zM91 123h5v3h-5zM97 123h3v3h-3zM102 123h5v3h-5zM109 123h7v3h-7zM118 123h6v3h-6zM125 123h8v3h-8zM134 123h5v3h-5zM140 123h7v3h-7zM24 127h5v2h-5zM30 127h3v2h-3zM34 127h9v2h-9zM45 127h3v2h-3zM49 127h4v2h-4zM54 127h11v2h-11zM66 127h3v2h-3zM70 127h8v2h-8zM79 127h12v2h-12zM92 127h12v2h-12zM105 127h9v2h-9zM115 127h6v2h-6zM122 127h9v2h-9zM133 127h5v2h-5zM139 127h4v2h-4zM145 127h2v2h-2zM24 130h8v2h-8zM34 130h3v2h-3zM38 130h9v2h-9zM49 130h3v2h-3zM53 130h6v2h-6zM33 133h8v3h-8zM42 133h9v3h-9zM53 133h12v3h-12zM66 133h4v3h-4zM72 133h10v3h-10zM83 133h10v3h-10zM94 133h9v3h-9zM105 133h6v3h-6zM112 133h12v3h-12zM126 133h12v3h-12zM139 133h8v3h-8zM24 137h11v2h-11zM37 137h10v2h-10zM48 137h7v2h-7zM57 137h3v2h-3zM62 137h3v2h-3zM66 137h5v2h-5zM73 137h10v2h-10zM84 137h7v2h-7zM93 137h12v2h-12zM106 137h6v2h-6zM114 137h10v2h-10zM126 137h9v2h-9zM136 137h5v2h-5zM142 137h4v2h-4zM24 140h5v2h-5zM31 140h5v2h-5zM37 140h4v2h-4zM43 140h7v2h-7zM51 140h4v2h-4zM56 140h3v2h-3zM61 140h8v2h-8zM70 140h11v2h-11zM82 140h10v2h-10zM93 140h11v2h-11zM105 140h9v2h-9zM115 140h10v2h-10zM126 140h6v2h-6zM133 140h4v2h-4zM139 140h8v2h-8zM24 143h6v3h-6zM31 143h10v3h-10zM42 143h11v3h-11zM54 143h5v3h-5zM60 143h5v3h-5zM66 143h8v3h-8zM75 143h8v3h-8zM84 143h7v3h-7zM92 143h9v3h-9zM102 143h12v3h-12zM115 143h3v3h-3zM120 143h12v3h-12zM133 143h10v3h-10zM144 143h3v3h-3zM24 147h6v2h-6zM32 147h8v2h-8zM42 147h6v2h-6zM50 147h9v2h-9zM60 147h3v2h-3zM64 147h8v2h-8zM74 147h7v2h-7zM83 147h12v2h-12zM96 147h6v2h-6zM103 147h5v2h-5zM109 147h12v2h-12zM122 147h3v2h-3zM126 147h7v2h-7zM134 147h7v2h-7zM142 147h5v2h-5zM24 150h8v2h-8zM33 150h6v2h-6zM40 150h4v2h-4zM46 150h6v2h-6zM54 150h8v2h-8zM63 150h9v2h-9zM73 150h5v2h-5zM79 150h7v2h-7zM87 150h8v2h-8zM97 150h9v2h-9zM107 150h10v2h-10zM118 150h11v2h-11zM130 150h4v2h-4zM135 150h11v2h-11zM33 153h9v3h-9zM43 153h10v3h-10zM55 153h4v3h-4zM60 153h4v3h-4zM65 153h4v3h-4zM71 153h10v3h-10zM82 153h10v3h-10zM93 153h6v3h-6zM101 153h9v3h-9zM112 153h6v3h-6zM119 153h4v3h-4zM124 153h9v3h-9zM134 153h7v3h-7zM143 153h4v3h-4zM24 157h7v2h-7zM32 157h3v2h-3zM37 157h12v2h-12zM50 157h3v2h-3zM54 157h8v2h-8zM63 157h12v2h-12zM76 157h9v2h-9zM86 157h7v2h-7zM94 157h4v2h-4zM100 157h4v2h-4zM106 157h4v2h-4zM111 157h6v2h-6zM118 157h8v2h-8zM127 157h8v2h-8zM136 157h11v2h-11zM24 160h8v2h-8zM33 160h5v2h-5zM39 160h4v2h-4zM44 160h5v2h-5zM50 160h11v2h-11zM62 160h10v2h-10zM74 160h12v2h-12zM87 160h6v2h-6zM94 160h9v2h-9zM104 160h6v2h-6zM112 160h11v2h-11zM125 160h4v2h-4zM130 160h4v2h-4zM135 160h9v2h-9zM146 160h1v2h-1zM24 163h12v3h-12zM37 163h10v3h-10zM48 163h5v3h-5zM55 163h9v3h-9zM65 163h4v3h-4zM70 163h5v3h-5zM77 163h12v3h-12zM91 163h7v3h-7zM100 163h10v3h-10zM111 163h9v3h-9zM121 163h5v3h-5zM127 163h8v3h-8zM136 163h3v3h-3zM140 163h7v3h-7zM24 167h11v2h-11zM37 167h11v2h-11zM49 167h4v2h-4zM54 167h11v2h-11zM67 167h4v2h-4zM72 167h12v2h-12zM85 167h5v2h-5zM92 167h4v2h-4zM98 167h11v2h-11zM110 167h7v2h-7zM118 167h6v2h-6zM125 167h12v2h-12zM138 167h9v2h-9zM24 170h6v2h-6zM32 170h10v2h-10zM43 170h11v2h-11zM55 170h10v2h-10zM66 170h4v2h-4zM72 170h5v2h-5zM78 170h12v2h-12zM92 170h5v2h-5zM98 170h12v2h-12zM112 170h4v2h-4zM117 170h3v2h-3zM121 170h5v2h-5zM127 170h9v2h-9zM137 170h7v2h-7zM146 170h1v2h-1zM33 173h4v3h-4zM38 173h7v3h-7zM47 173h3v3h-3zM51 173h9v3h-9zM61 173h4v3h-4zM66 173h7v3h-7zM75 173h4v3h-4zM81 173h9v3h-9zM91 173h10v3h-10zM33 177h5v2h-5zM40 177h11v2h-11zM52 177h9v2h-9zM63 177h7v2h-7zM71 177h12v2h-12zM84 177h6v2h-6zM91 177h4v2h-4zM96 177h10v2h-10zM107 177h8v2h-8zM117 177h5v2h-5zM33 180h4v2h-4zM38 180h7v2h-7zM47 180h3v2h-3zM51 180h11v2h-11zM63 180h11v2h-11zM75 180h9v2h-9zM85 180h4v2h-4zM91 180h8v2h-8zM100 180h8v2h-8zM33 183h6v3h-6zM41 183h11v3h-11zM53 183h3v3h-3zM57 183h9v3h-9zM68 183h4v3h-4zM73 183h12v3h-12zM86 183h6v3h-6zM93 183h12v3h-12zM107 183h5v3h-5zM33 187h12v2h-12zM47 187h3v2h-3zM51 187h5v2h-5zM57 187h4v2h-4zM63 187h8v2h-8zM72 187h4v2h-4zM33 190h7v2h-7zM42 190h7v2h-7zM50 190h8v2h-8zM59 190h4v2h-4zM64 190h12v2h-12zM78 190h4v2h-4zM83 190h9v2h-9zM93 190h7v2h-7zM101 190h3v2h-3zM105 190h5v2h-5zM111 190h7v2h-7zM120 190h7v2h-7zM128 190h10v2h-10zM139 190h8v2h-8zM33 193h11v3h-11zM45 193h8v3h-8zM55 193h3v3h-3zM60 193h1v3h-1zM33 197h11v2h-11zM45 197h10v2h-10zM56 197h8v2h-8zM66 197h4v2h-4zM71 197h4v2h-4zM76 197h5v2h-5zM82 197h10v2h-10zM94 197h9v2h-9zM104 197h10v2h-10zM115 197h4v2h-4zM120 197h8v2h-8zM130 197h11v2h-11zM143 197h4v2h-4zM33 200h9v2h-9zM43 200h11v2h-11zM55 200h6v2h-6zM62 200h4v2h-4zM24 203h11v3h-11zM36 203h4v3h-4zM41 203h7v3h-7zM49 203h9v3h-9zM59 203h9v3h-9zM69 203h6v3h-6zM77 203h10v3h-10zM88 203h9v3h-9zM99 203h9v3h-9zM110 203h10v3h-10zM121 203h11v3h-11zM134 203h5v3h-5zM141 203h6v3h-6z" fill="url(#dt)"/>
</g>
<g transform="translate(26,465)">
<rect x="2" y="2" width="160" height="225" fill="#000"/>
<rect x="0.5" y="0.5" width="158" height="223" fill="#fff" stroke="#000" stroke-width="1"/>
<rect x="0" y="207" width="24" height="1" fill="#000"/><rect x="147" y="207" width="12" height="1" fill="#000"/>
<path d="M23 16.5H148M23 207.5H148M23.5 16V208M147.5 16V208" fill="none" stroke="#000" stroke-width="1" stroke-dasharray="1 1"/>
<path d="M33 17h3v2h-3zM37 17h5v2h-5zM44 17h8v2h-8zM53 17h12v2h-12zM67 17h9v2h-9zM77 17h12v2h-12zM91 17h10v2h-10zM102 17h12v2h-12zM115 17h10v2h-10zM127 17h9v2h-9zM137 17h4v2h-4zM143 17h4v2h-4zM33 20h7v2h-7zM41 20h9v2h-9zM52 20h3v2h-3zM56 20h4v2h-4zM61 20h9v2h-9zM71 20h6v2h-6zM78 20h12v2h-12zM91 20h11v2h-11zM103 20h9v2h-9zM114 20h10v2h-10zM125 20h10v2h-10zM136 20h6v2h-6zM143 20h4v2h-4zM24 23h7v3h-7zM33 23h5v3h-5zM39 23h8v3h-8zM49 23h5v3h-5zM56 23h10v3h-10zM67 23h10v3h-10zM78 23h10v3h-10zM89 23h7v3h-7zM97 23h6v3h-6zM104 23h6v3h-6zM111 23h11v3h-11zM124 23h12v3h-12zM137 23h4v3h-4zM142 23h5v3h-5zM24 27h8v2h-8zM34 27h8v2h-8zM43 27h4v2h-4zM49 27h7v2h-7zM33 30h7v2h-7zM41 30h6v2h-6zM48 30h3v2h-3zM52 30h11v2h-11zM64 30h7v2h-7zM72 30h7v2h-7zM81 30h5v2h-5zM87 30h10v2h-10zM98 30h7v2h-7zM106 30h7v2h-7zM114 30h11v2h-11zM126 30h9v2h-9zM136 30h11v2h-11zM24 33h12v3h-12zM37 33h11v3h-11zM50 33h5v3h-5zM57 33h12v3h-12zM71 33h7v3h-7zM79 33h3v3h-3zM83 33h8v3h-8zM93 33h11v3h-11zM105 33h10v3h-10zM116 33h8v3h-8zM125 33h6v3h-6zM133 33h11v3h-11zM145 33h2v3h-2zM24 37h6v2h-6zM31 37h11v2h-11zM43 37h12v2h-12zM57 37h4v2h-4zM62 37h3v2h-3zM66 37h12v2h-12zM79 37h1v2h-1zM33 40h7v2h-7zM41 40h5v2h-5zM47 40h4v2h-4zM52 40h3v2h-3zM56 40h12v2h-12zM69 40h11v2h-11zM82 40h4v2h-4zM87 40h11v2h-11zM100 40h5v2h-5zM106 40h11v2h-11zM119 40h8v2h-8zM129 40h10v2h-10zM140 40h4v2h-4zM145 40h2v2h-2zM24 43h4v3h-4zM30 43h10v3h-10zM41 43h11v3h-11zM54 43h4v3h-4zM59 43h1v3h-1zM33 47h8v2h-8zM42 47h7v2h-7zM50 47h11v2h-11zM62 47h9v2h-9zM72 47h12v2h-12zM85 47h12v2h-12zM99 47h12v2h-12zM113 47h12v2h-12zM126 47h5v2h-5zM132 47h11v2h-11zM144 47h3v2h-3zM24 50h7v2h-7zM32 50h3v2h-3zM36 50h3v2h-3zM40 50h5v2h-5zM47 50h3v2h-3zM33 53h3v3h-3zM37 53h4v3h-4zM42 53h9v3h-9zM52 53h9v3h-9zM33 57h6v2h-6zM40 57h9v2h-9zM50 57h6v2h-6zM57 57h3v2h-3zM62 57h8v2h-8zM72 57h8v2h-8zM82 57h8v2h-8zM91 57h2v2h-2zM33 60h5v2h-5zM39 60h5v2h-5zM45 60h7v2h-7zM53 60h10v2h-10zM64 60h8v2h-8zM73 60h6v2h-6zM81 60h12v2h-12zM94 60h12v2h-12zM108 60h12v2h-12zM121 60h12v2h-12zM134 60h5v2h-5zM140 60h6v2h-6zM24 63h7v3h-7zM33 63h8v3h-8zM43 63h6v3h-6zM51 63h3v3h-3zM55 63h11v3h-11zM67 63h4v3h-4zM73 63h11v3h-11zM85 63h10v3h-10zM96 63h3v3h-3zM100 63h11v3h-11zM112 63h8v3h-8zM122 63h8v3h-8zM131 63h4v3h-4zM136 63h5v3h-5zM142 63h5v3h-5zM24 67h9v2h-9zM34 67h11v2h-11zM47 67h4v2h-4zM52 67h3v2h-3zM56 67h6v2h-6zM33 70h4v2h-4zM38 70h5v2h-5zM44 70h4v2h-4zM49 70h5v2h-5zM55 70h6v2h-6zM62 70h8v2h-8zM71 70h5v2h-5zM77 70h8v2h-8zM86 70h6v2h-6zM93 70h5v2h-5zM33 73h6v3h-6zM41 73h10v3h-10zM52 73h8v3h-8zM62 73h4v3h-4zM67 73h5v3h-5zM73 73h5v3h-5zM80 73h8v3h-8zM90 73h3v3h-3zM94 73h7v3h-7zM102 73h5v3h-5zM109 73h4v3h-4zM114 73h11v3h-11zM127 73h11v3h-11zM140 73h7v3h-7zM24 77h7v2h-7zM32 77h4v2h-4zM38 77h6v2h-6zM45 77h4v2h-4zM50 77h11v2h-11zM62 77h5v2h-5zM68 77h12v2h-12zM81 77h7v2h-7zM89 77h12v2h-12zM102 77h8v2h-8zM112 77h10v2h-10zM123 77h3v2h-3zM127 77h5v2h-5zM133 77h3v2h-3zM137 77h10v2h-10zM24 80h11v2h-11zM36 80h7v2h-7zM44 80h3v2h-3zM48 80h9v2h-9zM59 80h6v2h-6zM66 80h3v2h-3zM70 80h9v2h-9zM80 80h12v2h-12zM94 80h4v2h-4zM99 80h3v2h-3zM103 80h8v2h-8zM112 80h5v2h-5zM118 80h3v2h-3zM122 80h7v2h-7zM131 80h11v2h-11zM143 80h4v2h-4zM24 83h8v3h-8zM33 83h8v3h-8zM42 83h12v3h-12zM56 83h12v3h-12zM69 83h9v3h-9zM80 83h12v3h-12zM93 83h7v3h-7zM101 83h10v3h-10zM112 83h3v3h-3zM33 87h10v2h-10zM45 87h11v2h-11zM57 87h5v2h-5zM64 87h7v2h-7zM33 90h11v2h-11zM46 90h9v2h-9zM56 90h8v2h-8zM65 90h4v2h-4zM71 90h3v2h-3zM75 90h10v2h-10zM87 90h4v2h-4zM92 90h11v2h-11zM105 90h9v2h-9zM116 90h3v2h-3zM121 90h10v2h-10zM132 90h7v2h-7zM140 90h7v2h-7zM24 93h10v3h-10zM35 93h4v3h-4zM40 93h10v3h-10zM52 93h10v3h-10zM63 93h5v3h-5zM69 93h7v3h-7zM78 93h10v3h-10zM89 93h4v3h-4zM94 93h3v3h-3zM98 93h10v3h-10zM33 97h7v2h-7zM41 97h11v2h-11zM53 97h3v2h-3zM33 100h3v2h-3zM37 100h10v2h-10zM48 100h5v2h-5zM54 100h8v2h-8zM64 100h11v2h-11zM77 100h8v2h-8zM86 100h6v2h-6zM94 100h10v2h-10zM105 100h5v2h-5zM112 100h6v2h-6zM120 100h2v2h-2zM33 103h4v3h-4zM38 103h7v3h-7zM47 103h6v3h-6zM54 103h3v3h-3zM59 103h8v3h-8zM68 103h5v3h-5zM33 107h9v2h-9zM44 107h4v2h-4zM50 107h5v2h-5zM56 107h7v2h-7zM64 107h9v2h-9zM74 107h7v2h-7zM82 107h12v2h-12zM96 107h7v2h-7zM105 107h12v2h-12zM119 107h5v2h-5zM126 107h3v2h-3zM130 107h9v2h-9zM140 107h3v2h-3zM145 107h2v2h-2zM24 110h10v2h-10zM35 110h9v2h-9zM46 110h8v2h-8zM55 110h3v2h-3zM59 110h10v2h-10zM70 110h6v2h-6zM78 110h12v2h-12zM91 110h5v2h-5zM98 110h9v2h-9zM108 110h9v2h-9zM33 113h3v3h-3zM38 113h7v3h-7zM47 113h4v3h-4zM52 113h8v3h-8zM61 113h3v3h-3zM65 113h9v3h-9zM33 117h10v2h-10zM44 117h8v2h-8zM53 117h7v2h-7zM61 117h11v2h-11zM73 117h4v2h-4zM78 117h4v2h-4zM84 117h5v2h-5zM33 120h10v2h-10zM45 120h11v2h-11zM57 120h7v2h-7zM65 120h12v2h-12zM78 120h6v2h-6zM85 120h8v2h-8zM94 120h4v2h-4zM99 120h3v2h-3zM103 120h7v2h-7zM112 120h11v2h-11zM124 120h6v2h-6zM131 120h6v2h-6zM138 120h4v2h-4zM143 120h4v2h-4zM24 123h10v3h-10zM36 123h9v3h-9zM47 123h11v3h-11zM60 123h11v3h-11zM72 123h12v3h-12zM86 123h9v3h-9zM96 123h11v3h-11zM108 123h6v3h-6zM115 123h3v3h-3zM120 123h5v3h-5zM126 123h11v3h-11zM138 123h9v3h-9zM24 127h7v2h-7zM33 127h3v2h-3zM38 127h3v2h-3zM42 127h3v2h-3zM46 127h4v2h-4zM51 127h6v2h-6zM58 127h3v2h-3zM63 127h4v2h-4zM68 127h7v2h-7zM33 137h12v2h-12zM46 137h5v2h-5zM52 137h10v2h-10zM64 137h6v2h-6zM71 137h6v2h-6zM79 137h8v2h-8zM33 140h4v2h-4zM39 140h6v2h-6zM33 147h6v2h-6zM40 147h12v2h-12zM53 147h9v2h-9zM63 147h9v2h-9zM73 147h9v2h-9zM84 147h10v2h-10zM96 147h4v2h-4zM101 147h6v2h-6zM109 147h10v2h-10zM121 147h8v2h-8zM131 147h4v2h-4zM136 147h7v2h-7zM144 147h3v2h-3zM24 150h11v2h-11zM37 150h9v2h-9zM48 150h9v2h-9zM58 150h7v2h-7zM66 150h4v2h-4zM72 150h7v2h-7zM80 150h6v2h-6zM87 150h9v2h-9zM97 150h10v2h-10zM108 150h8v2h-8zM117 150h12v2h-12zM130 150h9v2h-9zM140 150h7v2h-7zM24 153h10v3h-10zM36 153h10v3h-10zM48 153h11v3h-11zM60 153h9v3h-9zM71 153h11v3h-11zM83 153h4v3h-4zM89 153h6v3h-6zM96 153h6v3h-6zM104 153h12v3h-12zM118 153h10v3h-10zM129 153h6v3h-6zM137 153h7v3h-7zM145 153h2v3h-2zM24 157h11v2h-11zM37 157h8v2h-8zM47 157h9v2h-9zM57 157h9v2h-9zM67 157h9v2h-9zM77 157h4v2h-4zM83 157h9v2h-9zM93 157h9v2h-9zM103 157h6v2h-6zM111 157h9v2h-9zM121 157h10v2h-10zM133 157h3v2h-3zM137 157h9v2h-9zM24 160h12v2h-12zM38 160h8v2h-8zM48 160h8v2h-8zM58 160h10v2h-10zM69 160h7v2h-7zM78 160h11v2h-11zM90 160h11v2h-11zM102 160h3v2h-3zM106 160h12v2h-12zM119 160h11v2h-11zM131 160h7v2h-7zM140 160h7v2h-7zM33 163h10v3h-10zM44 163h5v3h-5zM51 163h10v3h-10zM63 163h10v3h-10zM74 163h9v3h-9zM85 163h5v3h-5zM91 163h12v3h-12zM104 163h10v3h-10zM115 163h11v3h-11zM128 163h10v3h-10zM140 163h3v3h-3zM144 163h3v3h-3zM24 167h3v2h-3zM28 167h3v2h-3zM32 167h11v2h-11zM45 167h5v2h-5zM52 167h8v2h-8zM61 167h9v2h-9zM72 167h7v2h-7zM80 167h8v2h-8zM90 167h11v2h-11zM103 167h3v2h-3zM108 167h8v2h-8zM117 167h9v2h-9zM127 167h7v2h-7zM136 167h11v2h-11zM24 170h6v2h-6zM31 170h3v2h-3zM35 170h4v2h-4zM41 170h3v2h-3zM46 170h6v2h-6zM53 170h3v2h-3zM57 170h3v2h-3zM62 170h12v2h-12zM75 170h7v2h-7zM83 170h6v2h-6zM91 170h8v2h-8zM101 170h8v2h-8zM110 170h6v2h-6zM117 170h8v2h-8zM126 170h10v2h-10zM138 170h7v2h-7zM24 173h11v3h-11zM36 173h6v3h-6zM44 173h6v3h-6zM52 173h12v3h-12zM65 173h5v3h-5zM72 173h8v3h-8zM81 173h9v3h-9zM91 173h5v3h-5zM98 173h5v3h-5zM104 173h8v3h-8zM114 173h8v3h-8zM123 173h8v3h-8zM132 173h10v3h-10zM143 173h3v3h-3zM24 177h10v2h-10zM36 177h3v2h-3zM41 177h4v2h-4zM47 177h11v2h-11zM60 177h3v2h-3zM64 177h8v2h-8zM73 177h12v2h-12zM86 177h10v2h-10zM98 177h11v2h-11zM110 177h4v2h-4zM115 177h9v2h-9zM125 177h12v2h-12zM138 177h9v2h-9zM24 180h3v2h-3zM29 180h5v2h-5zM36 180h8v2h-8zM45 180h10v2h-10zM56 180h6v2h-6zM64 180h3v2h-3zM68 180h6v2h-6zM75 180h3v2h-3zM79 180h7v2h-7zM87 180h7v2h-7zM95 180h3v2h-3zM99 180h7v2h-7zM107 180h12v2h-12zM120 180h7v2h-7zM128 180h4v2h-4zM133 180h4v2h-4zM138 180h9v2h-9zM24 183h11v3h-11zM37 183h10v3h-10zM49 183h11v3h-11zM61 183h9v3h-9zM71 183h4v3h-4zM33 187h10v2h-10zM44 187h11v2h-11zM57 187h11v2h-11zM69 187h7v2h-7zM77 187h7v2h-7zM33 190h9v2h-9zM43 190h3v2h-3zM48 190h10v2h-10zM59 190h11v2h-11zM71 190h8v2h-8zM81 190h10v2h-10zM93 190h8v2h-8zM103 190h10v2h-10zM114 190h9v2h-9zM125 190h11v2h-11zM137 190h10v2h-10zM24 193h6v3h-6zM31 193h4v3h-4zM36 193h11v3h-11zM48 193h11v3h-11zM60 193h11v3h-11zM73 193h7v3h-7zM81 193h7v3h-7zM90 193h8v3h-8zM99 193h11v3h-11zM111 193h3v3h-3zM115 193h9v3h-9zM126 193h4v3h-4zM131 193h11v3h-11zM143 193h4v3h-4zM24 197h12v2h-12zM37 197h12v2h-12zM51 197h5v2h-5zM57 197h10v2h-10zM69 197h6v2h-6zM77 197h10v2h-10zM88 197h10v2h-10zM100 197h11v2h-11zM112 197h12v2h-12zM126 197h12v2h-12zM139 197h3v2h-3zM143 197h4v2h-4zM24 200h6v2h-6zM31 200h8v2h-8zM40 200h5v2h-5z" fill="url(#dt)"/>
</g>
<g transform="translate(26,693)">
<rect x="2" y="2" width="160" height="225" fill="#000"/>
<rect x="0.5" y="0.5" width="158" height="223" fill="#fff" stroke="#000" stroke-width="1"/>
<rect x="0" y="207" width="24" height="1" fill="#000"/><rect x="147" y="207" width="12" height="1" fill="#000"/>
<path d="M23 16.5H148M23 207.5H148M23.5 16V208M147.5 16V208" fill="none" stroke="#000" stroke-width="1" stroke-dasharray="1 1"/>
<path d="M33 17h4v2h-4zM39 17h5v2h-5zM45 17h6v2h-6zM53 17h6v2h-6zM60 17h3v2h-3zM64 17h3v2h-3zM69 17h5v2h-5zM75 17h3v2h-3zM80 17h5v2h-5zM86 17h8v2h-8zM95 17h5v2h-5zM101 17h4v2h-4zM107 17h3v2h-3zM112 17h3v2h-3zM117 17h7v2h-7zM125 17h7v2h-7zM133 17h5v2h-5zM139 17h8v2h-8zM24 20h3v2h-3zM28 20h12v2h-12zM41 20h7v2h-7zM49 20h4v2h-4zM54 20h7v2h-7zM62 20h6v2h-6zM69 20h7v2h-7zM78 20h4v2h-4zM84 20h9v2h-9zM95 20h8v2h-8zM104 20h3v2h-3zM108 20h9v2h-9zM118 20h12v2h-12zM131 20h4v2h-4zM137 20h7v2h-7zM145 20h2v2h-2zM24 23h8v3h-8zM34 23h8v3h-8zM44 23h8v3h-8zM53 23h5v3h-5zM60 23h12v3h-12zM73 23h6v3h-6zM81 23h3v3h-3zM85 23h12v3h-12zM99 23h6v3h-6zM106 23h6v3h-6zM113 23h3v3h-3zM117 23h11v3h-11zM129 23h5v3h-5zM135 23h9v3h-9zM145 23h2v3h-2zM24 27h12v2h-12zM37 27h5v2h-5zM43 27h3v2h-3zM47 27h4v2h-4zM52 27h7v2h-7zM60 27h12v2h-12zM73 27h3v2h-3zM77 27h9v2h-9zM87 27h4v2h-4zM93 27h3v2h-3zM97 27h8v2h-8zM107 27h3v2h-3zM112 27h4v2h-4zM117 27h7v2h-7zM125 27h6v2h-6zM132 27h4v2h-4zM137 27h6v2h-6zM144 27h3v2h-3zM24 30h4v2h-4zM29 30h11v2h-11zM41 30h9v2h-9zM51 30h9v2h-9zM62 30h11v2h-11zM74 30h9v2h-9zM84 30h10v2h-10zM95 30h3v2h-3zM100 30h3v2h-3zM104 30h8v2h-8zM113 30h9v2h-9zM124 30h9v2h-9zM134 30h11v2h-11zM146 30h1v2h-1zM24 33h9v3h-9zM35 33h8v3h-8zM45 33h4v3h-4zM51 33h3v3h-3zM55 33h7v3h-7zM63 33h7v3h-7zM71 33h4v3h-4zM77 33h5v3h-5zM84 33h9v3h-9zM94 33h7v3h-7zM102 33h11v3h-11zM114 33h9v3h-9zM125 33h8v3h-8zM135 33h12v3h-12zM24 37h12v2h-12zM38 37h7v2h-7zM46 37h10v2h-10zM58 37h7v2h-7zM67 37h5v2h-5zM73 37h9v2h-9zM83 37h12v2h-12zM96 37h5v2h-5zM103 37h3v2h-3zM107 37h12v2h-12zM120 37h6v2h-6zM127 37h12v2h-12zM140 37h6v2h-6zM24 40h3v2h-3zM28 40h5v2h-5zM34 40h11v2h-11zM47 40h12v2h-12zM60 40h11v2h-11zM72 40h6v2h-6zM79 40h11v2h-11zM92 40h1v2h-1zM33 43h3v3h-3zM37 43h3v3h-3zM42 43h3v3h-3zM47 43h8v3h-8zM57 43h7v3h-7zM65 43h11v3h-11zM78 43h3v3h-3zM82 43h9v3h-9zM93 43h6v3h-6zM100 43h5v3h-5zM107 43h10v3h-10zM118 43h9v3h-9zM128 43h8v3h-8zM138 43h9v3h-9zM24 47h8v2h-8zM34 47h10v2h-10zM46 47h12v2h-12zM59 47h6v2h-6zM66 47h12v2h-12zM80 47h5v2h-5zM87 47h3v2h-3zM91 47h9v2h-9zM101 47h11v2h-11zM114 47h6v2h-6zM122 47h8v2h-8zM132 47h3v2h-3zM136 47h4v2h-4zM141 47h5v2h-5zM24 50h7v2h-7zM33 50h7v2h-7zM42 50h10v2h-10zM53 50h4v2h-4zM58 50h3v2h-3zM62 50h6v2h-6zM69 50h3v2h-3zM74 50h5v2h-5zM80 50h5v2h-5zM87 50h8v2h-8zM96 50h4v2h-4zM102 50h8v2h-8zM111 50h8v2h-8zM121 50h1v2h-1zM33 53h11v3h-11zM46 53h12v3h-12zM59 53h3v3h-3zM64 53h11v3h-11zM76 53h7v3h-7zM84 53h7v3h-7zM93 53h9v3h-9zM103 53h6v3h-6zM110 53h10v3h-10zM121 53h7v3h-7zM129 53h12v3h-12zM143 53h4v3h-4zM24 57h7v2h-7zM32 57h11v2h-11zM44 57h8v2h-8zM54 57h8v2h-8zM64 57h4v2h-4zM70 57h7v2h-7zM78 57h10v2h-10zM90 57h11v2h-11zM102 57h7v2h-7zM110 57h10v2h-10zM121 57h10v2h-10zM132 57h4v2h-4zM137 57h3v2h-3zM142 57h5v2h-5zM24 60h5v2h-5zM30 60h5v2h-5zM37 60h9v2h-9zM33 63h12v3h-12zM46 63h5v3h-5zM52 63h7v3h-7zM60 63h8v3h-8zM69 63h6v3h-6zM77 63h3v3h-3zM81 63h5v3h-5zM87 63h5v3h-5zM93 63h5v3h-5zM99 63h4v3h-4zM105 63h4v3h-4zM111 63h5v3h-5zM117 63h8v3h-8zM126 63h5v3h-5zM133 63h3v3h-3zM137 63h3v3h-3zM141 63h5v3h-5zM24 67h4v2h-4zM29 67h11v2h-11zM41 67h8v2h-8zM50 67h9v2h-9zM60 67h3v2h-3zM65 67h5v2h-5zM71 67h10v2h-10zM82 67h7v2h-7zM90 67h6v2h-6zM98 67h4v2h-4zM103 67h5v2h-5zM109 67h12v2h-12zM122 67h8v2h-8zM131 67h9v2h-9zM141 67h6v2h-6zM24 70h11v2h-11zM37 70h11v2h-11zM49 70h4v2h-4zM33 73h11v3h-11zM45 73h5v3h-5zM52 73h7v3h-7zM60 73h8v3h-8zM70 73h9v3h-9zM81 73h6v3h-6zM88 73h4v3h-4zM93 73h11v3h-11zM105 73h6v3h-6zM112 73h6v3h-6zM119 73h2v3h-2zM33 77h10v2h-10zM44 77h6v2h-6zM51 77h4v2h-4zM56 77h6v2h-6zM64 77h12v2h-12zM77 77h5v2h-5zM83 77h11v2h-11zM96 77h11v2h-11zM109 77h12v2h-12zM122 77h9v2h-9zM132 77h8v2h-8zM141 77h6v2h-6zM24 80h7v2h-7zM32 80h10v2h-10zM43 80h11v2h-11zM55 80h5v2h-5zM61 80h9v2h-9zM72 80h3v2h-3zM76 80h9v2h-9zM86 80h12v2h-12zM99 80h5v2h-5zM105 80h12v2h-12zM33 83h5v3h-5zM40 83h11v3h-11zM53 83h4v3h-4zM59 83h6v3h-6zM33 87h6v2h-6zM40 87h4v2h-4zM45 87h10v2h-10zM56 87h7v2h-7zM64 87h7v2h-7zM72 87h10v2h-10zM83 87h6v2h-6zM91 87h12v2h-12zM104 87h10v2h-10zM115 87h3v2h-3zM119 87h9v2h-9zM129 87h4v2h-4zM135 87h12v2h-12zM33 93h6v3h-6zM40 93h3v3h-3zM33 97h8v2h-8zM42 97h3v2h-3zM47 97h9v2h-9zM57 97h8v2h-8zM66 97h5v2h-5zM72 97h2v2h-2zM33 103h12v3h-12zM46 103h5v3h-5zM52 103h4v3h-4zM57 103h11v3h-11zM70 103h4v3h-4zM76 103h4v3h-4zM81 103h9v3h-9zM92 103h5v3h-5zM98 103h8v3h-8zM108 103h7v3h-7zM116 103h4v3h-4zM121 103h3v3h-3zM125 103h5v3h-5zM131 103h4v3h-4zM136 103h11v3h-11zM24 107h9v2h-9zM35 107h12v2h-12zM49 107h10v2h-10zM60 107h5v2h-5zM67 107h3v2h-3zM71 107h7v2h-7zM79 107h10v2h-10zM90 107h10v2h-10zM101 107h12v2h-12zM115 107h7v2h-7zM124 107h12v2h-12zM137 107h4v2h-4zM142 107h5v2h-5zM24 110h11v2h-11zM36 110h4v2h-4zM41 110h4v2h-4zM46 110h7v2h-7zM55 110h12v2h-12zM69 110h5v2h-5zM75 110h8v2h-8zM85 110h6v2h-6zM92 110h7v2h-7zM33 113h7v3h-7zM41 113h10v3h-10zM52 113h11v3h-11zM64 113h12v3h-12zM77 113h12v3h-12zM91 113h11v3h-11zM104 113h10v3h-10zM115 113h6v3h-6zM123 113h9v3h-9zM134 113h5v3h-5zM140 113h7v3h-7zM24 117h10v2h-10zM36 117h6v2h-6zM44 117h4v2h-4zM49 117h5v2h-5zM55 117h6v2h-6zM62 117h3v2h-3zM66 117h5v2h-5zM72 117h4v2h-4zM77 117h7v2h-7zM86 117h11v2h-11zM98 117h9v2h-9zM108 117h3v2h-3zM112 117h8v2h-8zM121 117h11v2h-11zM134 117h8v2h-8zM144 117h3v2h-3zM24 120h3v2h-3zM29 120h9v2h-9zM40 120h8v2h-8zM49 120h11v2h-11zM61 120h9v2h-9zM72 120h6v2h-6zM79 120h3v2h-3zM83 120h8v2h-8zM92 120h8v2h-8zM101 120h7v2h-7zM109 120h3v2h-3zM114 120h12v2h-12zM127 120h8v2h-8zM136 120h5v2h-5zM142 120h5v2h-5zM24 123h10v3h-10zM35 123h5v3h-5zM42 123h4v3h-4zM47 123h6v3h-6zM54 123h8v3h-8zM63 123h4v3h-4zM69 123h7v3h-7zM77 123h10v3h-10zM88 123h8v3h-8zM97 123h10v3h-10zM108 123h7v3h-7zM116 123h7v3h-7zM125 123h8v3h-8zM135 123h4v3h-4zM140 123h7v3h-7zM24 127h6v2h-6zM31 127h10v2h-10zM42 127h10v2h-10zM53 127h12v2h-12zM67 127h8v2h-8zM76 127h4v2h-4zM81 127h11v2h-11zM93 127h3v2h-3zM97 127h7v2h-7zM105 127h9v2h-9zM115 127h4v2h-4zM121 127h9v2h-9zM131 127h9v2h-9zM141 127h6v2h-6zM33 130h12v2h-12zM46 130h10v2h-10zM57 130h10v2h-10zM68 130h3v2h-3zM72 130h9v2h-9zM82 130h11v2h-11zM94 130h9v2h-9zM105 130h11v2h-11zM117 130h8v2h-8zM126 130h10v2h-10zM138 130h3v2h-3zM142 130h5v2h-5zM24 133h9v3h-9zM34 133h7v3h-7zM43 133h3v3h-3zM47 133h7v3h-7zM55 133h5v3h-5zM61 133h6v3h-6zM68 133h10v3h-10zM80 133h3v3h-3zM85 133h3v3h-3zM89 133h3v3h-3zM93 133h11v3h-11zM106 133h5v3h-5zM112 133h9v3h-9zM122 133h9v3h-9zM133 133h10v3h-10zM144 133h3v3h-3zM24 137h7v2h-7zM33 137h9v2h-9zM44 137h5v2h-5zM51 137h7v2h-7zM59 137h11v2h-11zM72 137h11v2h-11zM85 137h3v2h-3zM90 137h11v2h-11zM103 137h11v2h-11zM115 137h12v2h-12zM128 137h5v2h-5zM134 137h3v2h-3zM139 137h5v2h-5zM146 137h1v2h-1zM24 140h10v2h-10zM35 140h7v2h-7zM43 140h3v2h-3zM47 140h6v2h-6zM55 140h9v2h-9zM66 140h7v2h-7zM74 140h9v2h-9zM85 140h10v2h-10zM97 140h3v2h-3zM102 140h11v2h-11zM114 140h3v2h-3zM118 140h10v2h-10zM129 140h8v2h-8zM138 140h4v2h-4zM144 140h3v2h-3zM24 143h10v3h-10zM35 143h7v3h-7zM44 143h7v3h-7zM33 147h8v2h-8zM42 147h9v2h-9zM53 147h10v2h-10zM65 147h9v2h-9zM33 150h3v2h-3zM38 150h11v2h-11zM50 150h6v2h-6zM57 150h10v2h-10zM69 150h10v2h-10zM81 150h8v2h-8zM33 153h7v3h-7zM41 153h3v3h-3zM45 153h4v3h-4zM50 153h3v3h-3zM55 153h6v3h-6zM62 153h6v3h-6zM69 153h4v3h-4zM74 153h11v3h-11zM86 153h10v3h-10zM97 153h12v3h-12zM110 153h5v3h-5zM117 153h8v3h-8zM127 153h7v3h-7zM136 153h11v3h-11zM24 157h8v2h-8zM34 157h5v2h-5zM40 157h7v2h-7zM48 157h5v2h-5zM54 157h4v2h-4zM59 157h9v2h-9zM70 157h8v2h-8zM80 157h4v2h-4zM86 157h3v2h-3zM90 157h9v2h-9zM100 157h11v2h-11zM113 157h10v2h-10zM124 157h12v2h-12zM138 157h9v2h-9zM24 160h6v2h-6zM32 160h8v2h-8zM42 160h9v2h-9zM52 160h3v2h-3zM57 160h4v2h-4zM62 160h9v2h-9zM72 160h6v2h-6zM79 160h10v2h-10zM90 160h11v2h-11zM103 160h4v2h-4zM108 160h3v2h-3zM112 160h6v2h-6zM119 160h5v2h-5zM125 160h9v2h-9zM136 160h11v2h-11zM24 163h3v3h-3zM29 163h12v3h-12zM42 163h7v3h-7zM51 163h5v3h-5zM57 163h4v3h-4zM62 163h4v3h-4zM67 163h3v3h-3zM72 163h11v3h-11zM84 163h10v3h-10zM96 163h10v3h-10zM107 163h10v3h-10zM118 163h3v3h-3zM123 163h12v3h-12zM137 163h5v3h-5zM144 163h3v3h-3zM24 167h3v2h-3zM28 167h8v2h-8zM38 167h10v2h-10zM49 167h12v2h-12zM62 167h3v2h-3zM67 167h6v2h-6zM74 167h9v2h-9zM85 167h3v2h-3zM90 167h8v2h-8zM99 167h3v2h-3zM104 167h9v2h-9zM114 167h7v2h-7zM122 167h4v2h-4zM128 167h7v2h-7zM137 167h9v2h-9zM24 170h4v2h-4zM29 170h12v2h-12zM43 170h9v2h-9zM53 170h3v2h-3zM57 170h12v2h-12zM71 170h6v2h-6zM79 170h11v2h-11zM91 170h6v2h-6zM98 170h3v2h-3zM103 170h7v2h-7zM111 170h7v2h-7zM119 170h10v2h-10zM131 170h12v2h-12zM144 170h3v2h-3zM24 173h9v3h-9zM34 173h7v3h-7zM43 173h1v3h-1zM33 177h7v2h-7zM42 177h9v2h-9zM52 177h8v2h-8zM61 177h6v2h-6zM69 177h4v2h-4zM75 177h12v2h-12zM88 177h12v2h-12zM101 177h12v2h-12zM114 177h12v2h-12zM127 177h5v2h-5zM133 177h8v2h-8zM143 177h4v2h-4zM24 180h10v2h-10zM35 180h4v2h-4zM41 180h3v2h-3zM45 180h4v2h-4zM50 180h5v2h-5zM56 180h10v2h-10zM68 180h9v2h-9zM78 180h11v2h-11zM90 180h7v2h-7zM98 180h4v2h-4zM104 180h12v2h-12zM117 180h10v2h-10zM128 180h11v2h-11zM141 180h5v2h-5zM24 183h11v3h-11zM37 183h3v3h-3zM41 183h3v3h-3zM46 183h10v3h-10zM57 183h10v3h-10zM68 183h10v3h-10zM80 183h7v3h-7zM88 183h11v3h-11zM100 183h10v3h-10zM112 183h4v3h-4zM117 183h5v3h-5zM124 183h9v3h-9zM134 183h12v3h-12zM24 187h9v2h-9zM35 187h11v2h-11zM47 187h7v2h-7zM56 187h7v2h-7zM64 187h4v2h-4zM69 187h8v2h-8zM78 187h6v2h-6zM85 187h4v2h-4zM90 187h12v2h-12zM103 187h3v2h-3zM107 187h5v2h-5zM113 187h12v2h-12zM126 187h12v2h-12zM139 187h7v2h-7zM24 190h6v2h-6zM31 190h6v2h-6zM38 190h5v2h-5zM44 190h5v2h-5zM50 190h12v2h-12zM63 190h9v2h-9zM73 190h11v2h-11zM85 190h7v2h-7zM93 190h11v2h-11zM105 190h4v2h-4zM110 190h3v2h-3zM114 190h12v2h-12zM128 190h11v2h-11zM140 190h6v2h-6zM24 193h5v3h-5zM30 193h8v3h-8zM40 193h6v3h-6zM47 193h7v3h-7zM55 193h11v3h-11zM67 193h4v3h-4zM72 193h11v3h-11zM84 193h3v3h-3zM88 193h6v3h-6zM95 193h5v3h-5zM101 193h3v3h-3zM105 193h8v3h-8zM114 193h8v3h-8zM123 193h6v3h-6zM130 193h6v3h-6zM138 193h6v3h-6zM145 193h2v3h-2zM24 197h3v2h-3zM28 197h10v2h-10zM39 197h7v2h-7zM47 197h4v2h-4zM52 197h12v2h-12zM65 197h7v2h-7zM73 197h1v2h-1zM33 200h11v2h-11zM45 200h10v2h-10zM56 200h10v2h-10zM67 200h6v2h-6zM74 200h10v2h-10zM85 200h6v2h-6zM93 200h4v2h-4z" fill="url(#dt)"/>
</g>
<g transform="translate(26,921)">
<rect x="2" y="2" width="160" height="225" fill="#000"/>
<rect x="0.5" y="0.5" width="158" height="223" fill="#fff" stroke="#000" stroke-width="1"/>
<rect x="0" y="207" width="24" height="1" fill="#000"/><rect x="147" y="207" width="12" height="1" fill="#000"/>
<path d="M23 16.5H148M23 207.5H148M23.5 16V208M147.5 16V208" fill="none" stroke="#000" stroke-width="1" stroke-dasharray="1 1"/>
<path d="M24 17h8v2h-8zM33 17h3v2h-3zM38 17h4v2h-4zM43 17h10v2h-10zM55 17h9v2h-9zM65 17h5v2h-5zM71 17h10v2h-10zM83 17h6v2h-6zM90 17h6v2h-6zM97 17h10v2h-10zM108 17h8v2h-8zM118 17h10v2h-10zM129 17h4v2h-4zM135 17h3v2h-3zM139 17h7v2h-7zM24 20h12v2h-12zM37 20h2v2h-2zM24 23h12v3h-12zM37 23h10v3h-10zM48 23h9v3h-9zM58 23h11v3h-11zM70 23h5v3h-5zM77 23h10v3h-10zM88 23h10v3h-10zM100 23h6v3h-6zM107 23h8v3h-8zM116 23h3v3h-3zM120 23h10v3h-10zM131 23h10v3h-10zM142 23h5v3h-5zM24 27h9v2h-9zM34 27h6v2h-6zM41 27h7v2h-7zM50 27h11v2h-11zM62 27h12v2h-12zM76 27h12v2h-12zM89 27h11v2h-11zM102 27h11v2h-11zM114 27h8v2h-8zM123 27h4v2h-4zM128 27h10v2h-10zM139 27h4v2h-4zM144 27h3v2h-3zM24 30h10v2h-10zM35 30h4v2h-4zM41 30h12v2h-12zM54 30h5v2h-5zM61 30h10v2h-10zM73 30h4v2h-4zM78 30h4v2h-4zM84 30h4v2h-4zM90 30h9v2h-9zM100 30h5v2h-5zM106 30h4v2h-4zM112 30h4v2h-4zM117 30h11v2h-11zM130 30h5v2h-5zM136 30h11v2h-11zM24 33h12v3h-12zM38 33h11v3h-11zM50 33h3v3h-3zM54 33h8v3h-8zM63 33h4v3h-4zM69 33h5v3h-5zM76 33h4v3h-4zM81 33h5v3h-5zM87 33h6v3h-6zM95 33h8v3h-8zM104 33h11v3h-11zM116 33h2v3h-2zM33 37h6v2h-6zM40 37h9v2h-9zM50 37h4v2h-4zM55 37h5v2h-5zM62 37h3v2h-3zM66 37h12v2h-12zM79 37h6v2h-6zM86 37h12v2h-12zM99 37h11v2h-11zM111 37h12v2h-12zM125 37h7v2h-7zM133 37h6v2h-6zM140 37h6v2h-6zM24 40h8v2h-8zM33 40h11v2h-11zM46 40h3v2h-3zM50 40h3v2h-3zM54 40h4v2h-4zM59 40h12v2h-12zM73 40h6v2h-6zM80 40h4v2h-4zM85 40h6v2h-6zM93 40h5v2h-5zM99 40h7v2h-7zM107 40h8v2h-8zM116 40h5v2h-5zM123 40h12v2h-12zM136 40h11v2h-11zM24 43h12v3h-12zM38 43h8v3h-8zM47 43h9v3h-9zM58 43h12v3h-12zM71 43h6v3h-6zM79 43h9v3h-9zM89 43h6v3h-6zM97 43h3v3h-3zM101 43h8v3h-8zM110 43h9v3h-9zM120 43h11v3h-11zM132 43h11v3h-11zM145 43h2v3h-2zM24 47h5v2h-5zM31 47h11v2h-11zM44 47h6v2h-6zM51 47h4v2h-4zM57 47h10v2h-10zM68 47h4v2h-4zM73 47h3v2h-3zM78 47h9v2h-9zM89 47h10v2h-10zM100 47h5v2h-5zM107 47h4v2h-4zM113 47h6v2h-6zM121 47h7v2h-7zM129 47h3v2h-3zM133 47h4v2h-4zM138 47h9v2h-9zM24 50h12v2h-12zM38 50h12v2h-12zM52 50h6v2h-6zM33 53h7v3h-7zM42 53h10v3h-10zM54 53h11v3h-11zM66 53h3v3h-3zM33 63h12v3h-12zM46 63h3v3h-3zM33 67h11v2h-11zM45 67h7v2h-7zM53 67h8v2h-8zM62 67h10v2h-10zM74 67h11v2h-11zM86 67h8v2h-8zM95 67h11v2h-11zM107 67h11v2h-11zM119 67h12v2h-12zM132 67h9v2h-9zM142 67h4v2h-4zM24 70h3v2h-3zM28 70h12v2h-12zM42 70h12v2h-12zM55 70h9v2h-9zM66 70h10v2h-10zM78 70h11v2h-11zM90 70h11v2h-11zM102 70h4v2h-4zM108 70h11v2h-11zM121 70h3v2h-3zM125 70h10v2h-10zM137 70h10v2h-10zM24 73h5v3h-5zM30 73h11v3h-11zM43 73h8v3h-8zM52 73h5v3h-5zM58 73h5v3h-5zM64 73h5v3h-5zM70 73h12v3h-12zM84 73h6v3h-6zM91 73h4v3h-4zM97 73h10v3h-10zM108 73h11v3h-11zM120 73h10v3h-10zM131 73h10v3h-10zM142 73h5v3h-5zM33 77h10v2h-10zM44 77h4v2h-4zM50 77h11v2h-11zM62 77h11v2h-11zM74 77h12v2h-12zM88 77h9v2h-9zM98 77h6v2h-6zM106 77h7v2h-7zM114 77h11v2h-11zM127 77h12v2h-12zM140 77h6v2h-6zM24 80h8v2h-8zM33 80h10v2h-10zM44 80h10v2h-10zM55 80h6v2h-6zM62 80h6v2h-6zM69 80h8v2h-8zM79 80h7v2h-7zM87 80h12v2h-12zM101 80h10v2h-10zM113 80h5v2h-5zM119 80h12v2h-12zM133 80h11v2h-11zM146 80h1v2h-1zM24 83h7v3h-7zM32 83h9v3h-9zM42 83h7v3h-7zM51 83h12v3h-12zM64 83h9v3h-9zM74 83h9v3h-9zM84 83h9v3h-9zM95 83h5v3h-5zM102 83h11v3h-11zM114 83h11v3h-11zM126 83h5v3h-5zM133 83h6v3h-6zM140 83h7v3h-7zM24 87h3v2h-3zM29 87h3v2h-3zM33 87h3v2h-3zM37 87h10v2h-10zM48 87h10v2h-10zM59 87h5v2h-5zM65 87h3v2h-3zM70 87h3v2h-3zM74 87h8v2h-8zM83 87h10v2h-10zM95 87h6v2h-6zM103 87h4v2h-4zM108 87h12v2h-12zM121 87h10v2h-10zM132 87h8v2h-8zM141 87h4v2h-4zM146 87h1v2h-1zM24 90h6v2h-6zM31 90h5v2h-5zM37 90h10v2h-10zM48 90h6v2h-6zM56 90h3v2h-3zM60 90h12v2h-12zM73 90h3v2h-3zM77 90h8v2h-8zM87 90h9v2h-9zM98 90h4v2h-4zM103 90h3v2h-3zM108 90h12v2h-12zM121 90h3v2h-3zM125 90h6v2h-6zM132 90h10v2h-10zM143 90h4v2h-4zM24 93h5v3h-5zM30 93h4v3h-4zM36 93h4v3h-4zM41 93h4v3h-4zM46 93h3v3h-3zM51 93h3v3h-3zM55 93h7v3h-7zM64 93h10v3h-10zM75 93h5v3h-5zM81 93h11v3h-11zM94 93h6v3h-6zM101 93h11v3h-11zM113 93h9v3h-9zM124 93h6v3h-6zM131 93h4v3h-4zM136 93h4v3h-4zM142 93h5v3h-5zM24 97h11v2h-11zM36 97h7v2h-7zM44 97h8v2h-8zM53 97h10v2h-10zM64 97h3v2h-3zM68 97h9v2h-9zM78 97h4v2h-4zM83 97h8v2h-8zM93 97h9v2h-9zM103 97h4v2h-4zM109 97h6v2h-6zM33 100h6v2h-6zM40 100h3v2h-3zM44 100h7v2h-7zM53 100h5v2h-5zM59 100h12v2h-12zM72 100h9v2h-9zM82 100h6v2h-6zM89 100h12v2h-12zM103 100h9v2h-9zM114 100h11v2h-11zM126 100h11v2h-11zM138 100h9v2h-9zM24 103h4v3h-4zM29 103h10v3h-10zM41 103h7v3h-7zM49 103h9v3h-9zM60 103h10v3h-10zM71 103h8v3h-8zM80 103h12v3h-12zM94 103h4v3h-4zM99 103h6v3h-6zM106 103h3v3h-3zM110 103h11v3h-11zM122 103h8v3h-8zM132 103h3v3h-3zM137 103h10v3h-10zM24 107h5v2h-5zM30 107h11v2h-11zM42 107h4v2h-4zM47 107h6v2h-6zM54 107h11v2h-11zM66 107h10v2h-10zM78 107h3v2h-3zM83 107h12v2h-12zM96 107h11v2h-11zM109 107h5v2h-5zM115 107h4v2h-4zM120 107h7v2h-7zM129 107h12v2h-12zM142 107h5v2h-5zM24 110h12v2h-12zM38 110h10v2h-10zM49 110h10v2h-10zM61 110h8v2h-8zM70 110h4v2h-4zM76 110h11v2h-11zM89 110h6v2h-6zM97 110h4v2h-4zM102 110h7v2h-7zM110 110h7v2h-7zM33 113h11v3h-11zM45 113h12v3h-12zM58 113h9v3h-9zM68 113h5v3h-5zM74 113h3v3h-3zM78 113h8v3h-8zM87 113h8v3h-8zM97 113h10v3h-10zM108 113h9v3h-9zM119 113h3v3h-3zM124 113h12v3h-12zM137 113h10v3h-10zM24 117h10v2h-10zM36 117h7v2h-7zM44 117h6v2h-6zM51 117h9v2h-9zM61 117h11v2h-11zM74 117h9v2h-9zM84 117h7v2h-7zM92 117h7v2h-7zM101 117h10v2h-10zM113 117h5v2h-5zM119 117h4v2h-4zM125 117h7v2h-7zM133 117h5v2h-5zM139 117h7v2h-7zM24 120h11v2h-11zM37 120h5v2h-5zM44 120h4v2h-4zM49 120h6v2h-6zM56 120h8v2h-8zM66 120h7v2h-7zM75 120h5v2h-5zM81 120h7v2h-7zM89 120h12v2h-12zM103 120h12v2h-12zM117 120h1v2h-1zM33 123h10v3h-10zM44 123h4v3h-4zM50 123h12v3h-12zM63 123h11v3h-11zM75 123h11v3h-11zM87 123h12v3h-12zM100 123h10v3h-10zM111 123h8v3h-8zM120 123h6v3h-6zM127 123h11v3h-11zM140 123h5v3h-5zM24 127h11v2h-11zM36 127h7v2h-7zM45 127h10v2h-10zM56 127h10v2h-10zM67 127h8v2h-8zM77 127h12v2h-12zM90 127h5v2h-5zM97 127h7v2h-7zM105 127h4v2h-4zM110 127h3v2h-3zM115 127h11v2h-11zM127 127h9v2h-9zM137 127h10v2h-10zM24 130h8v2h-8zM33 130h8v2h-8zM43 130h6v2h-6zM50 130h9v2h-9zM61 130h9v2h-9zM71 130h4v2h-4zM77 130h4v2h-4zM82 130h7v2h-7zM90 130h8v2h-8zM99 130h6v2h-6zM106 130h7v2h-7zM114 130h6v2h-6zM33 133h5v3h-5zM39 133h4v3h-4zM44 133h8v3h-8zM53 133h5v3h-5zM59 133h6v3h-6zM66 133h10v3h-10zM77 133h9v3h-9zM87 133h9v3h-9zM97 133h12v3h-12zM110 133h4v3h-4zM115 133h8v3h-8zM125 133h8v3h-8zM134 133h12v3h-12zM24 137h10v2h-10zM35 137h1v2h-1zM33 140h3v2h-3zM38 140h4v2h-4zM43 140h8v2h-8zM52 140h12v2h-12zM65 140h9v2h-9zM76 140h10v2h-10zM87 140h7v2h-7zM96 140h7v2h-7zM104 140h8v2h-8zM33 143h3v3h-3zM38 143h4v3h-4zM43 143h10v3h-10zM55 143h4v3h-4zM61 143h3v3h-3zM66 143h5v3h-5zM72 143h7v3h-7zM80 143h2v3h-2zM33 147h7v2h-7zM42 147h4v2h-4zM47 147h3v2h-3zM52 147h11v2h-11zM64 147h4v2h-4zM70 147h10v2h-10zM81 147h11v2h-11zM93 147h10v2h-10zM104 147h7v2h-7zM112 147h11v2h-11zM125 147h11v2h-11zM137 147h8v2h-8zM146 147h1v2h-1zM24 150h3v2h-3zM28 150h6v2h-6zM35 150h9v2h-9zM46 150h11v2h-11zM58 150h4v2h-4zM63 150h7v2h-7zM71 150h11v2h-11zM83 150h7v2h-7zM92 150h5v2h-5zM98 150h4v2h-4zM103 150h10v2h-10zM114 150h11v2h-11zM126 150h3v2h-3zM130 150h12v2h-12zM143 150h4v2h-4zM24 153h8v3h-8zM33 153h6v3h-6zM40 153h11v3h-11zM52 153h8v3h-8zM61 153h10v3h-10zM72 153h8v3h-8zM81 153h3v3h-3zM85 153h7v3h-7zM94 153h3v3h-3zM99 153h4v3h-4zM105 153h9v3h-9zM116 153h9v3h-9zM126 153h8v3h-8zM135 153h6v3h-6zM142 153h5v3h-5zM24 157h11v2h-11zM36 157h6v2h-6zM44 157h12v2h-12zM57 157h8v2h-8zM33 160h8v2h-8zM43 160h11v2h-11zM56 160h9v2h-9zM66 160h9v2h-9zM76 160h3v2h-3zM81 160h10v2h-10zM92 160h7v2h-7zM101 160h5v2h-5zM107 160h11v2h-11zM120 160h10v2h-10zM131 160h3v2h-3zM136 160h10v2h-10zM24 163h11v3h-11zM36 163h9v3h-9zM46 163h8v3h-8zM55 163h10v3h-10zM67 163h3v3h-3zM72 163h9v3h-9zM83 163h5v3h-5zM89 163h4v3h-4zM94 163h11v3h-11zM106 163h10v3h-10zM117 163h5v3h-5zM123 163h7v3h-7zM131 163h5v3h-5zM137 163h8v3h-8zM146 163h1v3h-1zM24 167h6v2h-6zM31 167h9v2h-9zM41 167h5v2h-5zM47 167h11v2h-11zM59 167h7v2h-7zM67 167h7v2h-7zM76 167h4v2h-4zM82 167h12v2h-12zM95 167h4v2h-4zM100 167h7v2h-7zM108 167h3v2h-3zM113 167h12v2h-12zM126 167h4v2h-4zM131 167h12v2h-12zM144 167h3v2h-3zM24 170h9v2h-9zM34 170h6v2h-6zM41 170h4v2h-4zM46 170h6v2h-6zM53 170h10v2h-10zM64 170h5v2h-5zM70 170h3v2h-3zM75 170h5v2h-5zM81 170h6v2h-6zM88 170h7v2h-7zM96 170h4v2h-4zM101 170h4v2h-4zM106 170h4v2h-4zM112 170h4v2h-4zM118 170h12v2h-12zM131 170h11v2h-11zM143 170h3v2h-3zM24 173h9v3h-9zM34 173h5v3h-5zM41 173h8v3h-8zM51 173h10v3h-10zM62 173h7v3h-7zM70 173h10v3h-10zM81 173h3v3h-3zM85 173h12v3h-12zM98 173h12v3h-12zM112 173h11v3h-11zM125 173h11v3h-11zM137 173h5v3h-5zM144 173h3v3h-3zM24 177h7v2h-7zM32 177h7v2h-7zM41 177h4v2h-4zM46 177h3v2h-3zM51 177h5v2h-5zM57 177h7v2h-7zM65 177h3v2h-3zM69 177h10v2h-10zM80 177h3v2h-3zM84 177h10v2h-10zM95 177h3v2h-3zM99 177h3v2h-3zM104 177h12v2h-12zM118 177h12v2h-12zM132 177h11v2h-11zM144 177h3v2h-3zM24 180h11v2h-11zM36 180h7v2h-7zM44 180h6v2h-6zM52 180h5v2h-5zM59 180h10v2h-10zM70 180h8v2h-8zM79 180h12v2h-12zM33 187h7v2h-7zM41 187h12v2h-12zM54 187h7v2h-7zM62 187h6v2h-6zM70 187h11v2h-11zM83 187h9v2h-9zM94 187h11v2h-11zM107 187h7v2h-7zM115 187h8v2h-8zM124 187h7v2h-7zM132 187h5v2h-5zM138 187h5v2h-5zM144 187h3v2h-3zM24 190h11v2h-11zM36 190h8v2h-8zM45 190h8v2h-8zM54 190h6v2h-6zM61 190h9v2h-9zM71 190h7v2h-7zM80 190h3v2h-3zM84 190h7v2h-7zM92 190h11v2h-11zM104 190h10v2h-10zM115 190h7v2h-7zM123 190h3v2h-3zM128 190h7v2h-7zM136 190h8v2h-8zM145 190h2v2h-2zM24 193h4v3h-4zM30 193h4v3h-4zM35 193h5v3h-5zM42 193h11v3h-11zM54 193h4v3h-4zM59 193h4v3h-4zM65 193h4v3h-4zM70 193h10v3h-10zM82 193h5v3h-5zM89 193h5v3h-5zM96 193h4v3h-4zM101 193h9v3h-9zM111 193h7v3h-7zM120 193h12v3h-12zM133 193h9v3h-9zM143 193h4v3h-4zM24 197h4v2h-4zM29 197h9v2h-9zM39 197h6v2h-6zM47 197h12v2h-12zM61 197h6v2h-6zM68 197h5v2h-5zM74 197h5v2h-5zM81 197h8v2h-8zM90 197h12v2h-12zM103 197h4v2h-4zM108 197h9v2h-9zM119 197h8v2h-8zM128 197h12v2h-12zM142 197h5v2h-5zM24 200h9v2h-9zM34 200h5v2h-5zM40 200h11v2h-11zM52 200h4v2h-4zM57 200h5v2h-5zM63 200h11v2h-11zM76 200h11v2h-11zM89 200h6v2h-6zM96 200h12v2h-12zM109 200h9v2h-9zM120 200h3v2h-3zM124 200h12v2h-12zM137 200h5v2h-5zM143 200h4v2h-4z" fill="url(#dt)"/>
</g>
<g transform="translate(26,1149)">
<rect x="2" y="2" width="160" height="225" fill="#000"/>
<rect x="0.5" y="0.5" width="158" height="223" fill="#fff" stroke="#000" stroke-width="1"/>
<rect x="0" y="207" width="24" height="1" fill="#000"/><rect x="147" y="207" width="12" height="1" fill="#000"/>
<path d="M23 16.5H148M23 207.5H148M23.5 16V208M147.5 16V208" fill="none" stroke="#000" stroke-width="1" stroke-dasharray="1 1"/>
<path d="M24 17h3v2h-3zM28 17h9v2h-9zM38 17h9v2h-9zM48 17h10v2h-10zM59 17h12v2h-12zM72 17h10v2h-10zM83 17h11v2h-11zM95 17h5v2h-5zM102 17h6v2h-6zM109 17h12v2h-12zM122 17h6v2h-6zM130 17h3v2h-3zM135 17h5v2h-5zM141 17h6v2h-6zM24 20h12v2h-12zM38 20h12v2h-12zM52 20h7v2h-7zM61 20h6v2h-6zM68 20h6v2h-6zM75 20h4v2h-4zM80 20h3v2h-3zM84 20h12v2h-12zM97 20h4v2h-4zM103 20h5v2h-5zM109 20h5v2h-5zM115 20h8v2h-8zM33 23h12v3h-12zM46 23h9v3h-9zM56 23h9v3h-9zM66 23h5v3h-5zM72 23h4v3h-4zM77 23h10v3h-10zM88 23h3v3h-3zM92 23h12v3h-12zM105 23h8v3h-8zM114 23h10v3h-10zM125 23h10v3h-10zM136 23h8v3h-8zM145 23h2v3h-2zM24 27h5v2h-5zM31 27h5v2h-5zM37 27h5v2h-5zM43 27h9v2h-9zM53 27h7v2h-7zM62 27h3v2h-3zM66 27h10v2h-10zM77 27h3v2h-3zM82 27h11v2h-11zM94 27h8v2h-8zM104 27h10v2h-10zM116 27h3v2h-3zM121 27h10v2h-10zM133 27h11v2h-11zM145 27h2v2h-2zM33 30h11v2h-11zM45 30h6v2h-6zM52 30h3v2h-3zM57 30h12v2h-12zM70 30h6v2h-6zM78 30h8v2h-8zM88 30h10v2h-10zM99 30h8v2h-8zM108 30h5v2h-5zM115 30h9v2h-9zM125 30h10v2h-10zM136 30h4v2h-4zM142 30h5v2h-5zM24 33h4v3h-4zM30 33h12v3h-12zM43 33h12v3h-12zM57 33h5v3h-5zM64 33h11v3h-11zM76 33h9v3h-9zM86 33h10v3h-10zM97 33h6v3h-6zM104 33h6v3h-6zM111 33h12v3h-12zM124 33h12v3h-12zM137 33h5v3h-5zM144 33h3v3h-3zM24 37h4v2h-4zM29 37h3v2h-3zM33 37h5v2h-5zM40 37h3v2h-3zM44 37h7v2h-7zM53 37h7v2h-7zM61 37h5v2h-5zM67 37h11v2h-11zM79 37h7v2h-7zM88 37h7v2h-7zM97 37h7v2h-7zM105 37h4v2h-4zM110 37h7v2h-7zM118 37h12v2h-12zM132 37h8v2h-8zM141 37h5v2h-5zM24 40h9v2h-9zM35 40h10v2h-10zM46 40h1v2h-1zM33 43h3v3h-3zM37 43h8v3h-8zM46 43h11v3h-11zM59 43h4v3h-4zM64 43h11v3h-11zM77 43h8v3h-8zM86 43h10v3h-10zM98 43h3v3h-3zM103 43h4v3h-4zM109 43h5v3h-5zM116 43h6v3h-6zM123 43h3v3h-3zM127 43h12v3h-12zM140 43h7v3h-7zM24 47h12v2h-12zM37 47h4v2h-4zM43 47h8v2h-8zM53 47h4v2h-4zM58 47h3v2h-3zM62 47h5v2h-5zM68 47h8v2h-8zM78 47h5v2h-5zM85 47h4v2h-4zM90 47h4v2h-4zM96 47h12v2h-12zM109 47h11v2h-11zM122 47h8v2h-8zM131 47h12v2h-12zM145 47h2v2h-2zM24 50h6v2h-6zM31 50h6v2h-6zM38 50h11v2h-11zM50 50h3v2h-3zM33 53h8v3h-8zM43 53h3v3h-3zM47 53h12v3h-12zM60 53h4v3h-4zM65 53h6v3h-6zM73 53h10v3h-10zM84 53h4v3h-4zM90 53h4v3h-4zM96 53h9v3h-9zM106 53h4v3h-4zM112 53h11v3h-11zM124 53h3v3h-3zM128 53h10v3h-10zM140 53h7v3h-7zM24 57h9v2h-9zM34 57h8v2h-8zM44 57h6v2h-6zM51 57h8v2h-8zM60 57h6v2h-6zM67 57h6v2h-6zM74 57h9v2h-9zM84 57h10v2h-10zM96 57h6v2h-6zM103 57h6v2h-6zM111 57h7v2h-7zM119 57h10v2h-10zM131 57h7v2h-7zM139 57h8v2h-8zM24 60h4v2h-4zM29 60h3v2h-3zM33 60h3v2h-3zM37 60h8v2h-8zM47 60h9v2h-9zM57 60h6v2h-6zM64 60h4v2h-4zM33 63h5v3h-5zM39 63h3v3h-3zM43 63h3v3h-3zM47 63h3v3h-3zM51 63h12v3h-12zM65 63h9v3h-9zM75 63h4v3h-4zM80 63h3v3h-3zM84 63h8v3h-8zM93 63h9v3h-9zM103 63h3v3h-3zM107 63h8v3h-8zM117 63h5v3h-5zM123 63h12v3h-12zM136 63h9v3h-9zM146 63h1v3h-1zM33 67h12v2h-12zM46 67h4v2h-4zM51 67h10v2h-10zM62 67h6v2h-6zM69 67h4v2h-4zM74 67h8v2h-8zM84 67h8v2h-8zM93 67h12v2h-12zM107 67h6v2h-6zM115 67h3v2h-3zM119 67h11v2h-11zM131 67h10v2h-10zM142 67h5v2h-5zM24 70h11v2h-11zM36 70h3v2h-3zM40 70h12v2h-12zM53 70h3v2h-3zM57 70h7v2h-7zM66 70h3v2h-3zM71 70h7v2h-7zM79 70h11v2h-11zM91 70h10v2h-10zM102 70h11v2h-11zM115 70h3v2h-3zM119 70h12v2h-12zM132 70h5v2h-5zM138 70h8v2h-8zM24 73h3v3h-3zM28 73h3v3h-3zM33 73h9v3h-9zM43 73h5v3h-5zM49 73h7v3h-7zM57 73h4v3h-4zM62 73h9v3h-9zM73 73h12v3h-12zM86 73h11v3h-11zM98 73h11v3h-11zM110 73h9v3h-9zM120 73h7v3h-7zM129 73h11v3h-11zM141 73h6v3h-6zM24 77h8v2h-8zM34 77h6v2h-6zM41 77h10v2h-10zM53 77h5v2h-5zM33 80h10v2h-10zM45 80h12v2h-12zM59 80h9v2h-9zM70 80h8v2h-8zM79 80h8v2h-8zM88 80h4v2h-4zM94 80h5v2h-5zM101 80h7v2h-7zM109 80h5v2h-5zM115 80h4v2h-4zM120 80h7v2h-7zM129 80h8v2h-8zM139 80h8v2h-8zM24 83h4v3h-4zM30 83h9v3h-9zM41 83h9v3h-9zM51 83h8v3h-8zM61 83h4v3h-4zM66 83h6v3h-6zM73 83h9v3h-9zM83 83h7v3h-7zM92 83h10v3h-10zM104 83h12v3h-12zM118 83h6v3h-6zM125 83h9v3h-9zM136 83h4v3h-4zM142 83h5v3h-5zM24 87h10v2h-10zM35 87h5v2h-5zM41 87h4v2h-4zM46 87h4v2h-4zM51 87h11v2h-11zM63 87h8v2h-8zM72 87h4v2h-4zM78 87h5v2h-5zM84 87h5v2h-5zM90 87h3v2h-3zM94 87h8v2h-8zM104 87h10v2h-10zM115 87h11v2h-11zM127 87h9v2h-9zM137 87h10v2h-10zM33 90h6v2h-6zM40 90h8v2h-8zM49 90h4v2h-4zM54 90h7v2h-7zM63 90h4v2h-4zM68 90h11v2h-11zM80 90h8v2h-8zM90 90h6v2h-6zM97 90h12v2h-12zM111 90h4v2h-4zM116 90h8v2h-8zM125 90h11v2h-11zM137 90h10v2h-10zM33 93h3v3h-3zM37 93h11v3h-11zM49 93h6v3h-6zM57 93h12v3h-12zM70 93h4v3h-4zM75 93h4v3h-4zM81 93h10v3h-10zM92 93h12v3h-12zM106 93h4v3h-4zM33 107h4v2h-4zM38 107h12v2h-12zM52 107h8v2h-8zM62 107h5v2h-5zM33 110h4v2h-4zM38 110h12v2h-12zM52 110h8v2h-8zM62 110h2v2h-2zM33 117h4v2h-4zM38 117h5v2h-5zM33 120h8v2h-8zM42 120h10v2h-10zM33 123h5v3h-5zM39 123h5v3h-5zM45 123h6v3h-6zM53 123h8v3h-8zM63 123h3v3h-3zM67 123h8v3h-8zM76 123h11v3h-11zM88 123h6v3h-6zM33 127h12v2h-12zM47 127h4v2h-4zM52 127h11v2h-11zM65 127h8v2h-8zM74 127h7v2h-7zM82 127h6v2h-6zM33 130h8v2h-8zM42 130h10v2h-10zM53 130h11v2h-11zM65 130h12v2h-12zM79 130h6v2h-6zM33 133h6v3h-6zM41 133h3v3h-3zM45 133h11v3h-11zM57 133h4v3h-4zM62 133h4v3h-4zM67 133h1v3h-1zM33 137h4v2h-4zM38 137h11v2h-11zM50 137h3v2h-3zM54 137h3v2h-3zM58 137h5v2h-5zM65 137h6v2h-6zM72 137h1v2h-1zM33 143h5v3h-5zM39 143h9v3h-9zM50 143h8v3h-8zM59 143h11v3h-11zM71 143h3v3h-3zM76 143h12v3h-12zM33 147h3v2h-3zM37 147h12v2h-12zM50 147h12v2h-12zM63 147h3v2h-3zM67 147h10v2h-10zM79 147h7v2h-7zM33 150h9v2h-9zM43 150h3v2h-3zM47 150h4v2h-4zM52 150h4v2h-4zM57 150h3v2h-3zM61 150h8v2h-8zM71 150h2v2h-2zM33 153h5v3h-5zM40 153h3v3h-3zM45 153h4v3h-4zM50 153h6v3h-6zM33 157h9v2h-9zM43 157h11v2h-11zM56 157h10v2h-10zM68 157h11v2h-11zM81 157h4v2h-4zM86 157h5v2h-5zM92 157h1v2h-1zM33 160h8v2h-8zM42 160h5v2h-5zM49 160h5v2h-5zM33 163h10v3h-10zM44 163h9v3h-9zM24 170h3v2h-3zM28 170h9v2h-9zM39 170h11v2h-11zM52 170h9v2h-9zM62 170h10v2h-10zM74 170h9v2h-9zM84 170h4v2h-4zM89 170h12v2h-12zM103 170h3v2h-3zM107 170h3v2h-3zM111 170h3v2h-3zM115 170h9v2h-9zM126 170h9v2h-9zM136 170h11v2h-11zM24 173h10v3h-10zM35 173h3v3h-3zM39 173h5v3h-5zM45 173h6v3h-6zM52 173h5v3h-5zM58 173h8v3h-8zM67 173h10v3h-10zM78 173h4v3h-4zM83 173h12v3h-12zM96 173h6v3h-6zM103 173h12v3h-12zM116 173h9v3h-9zM126 173h4v3h-4zM131 173h10v3h-10zM143 173h4v3h-4zM24 177h7v2h-7zM33 177h10v2h-10zM45 177h8v2h-8zM54 177h11v2h-11zM66 177h3v2h-3zM71 177h9v2h-9zM81 177h10v2h-10zM92 177h2v2h-2zM24 183h6v3h-6zM31 183h12v3h-12zM44 183h10v3h-10zM56 183h8v3h-8zM65 183h9v3h-9zM76 183h12v3h-12zM90 183h5v3h-5zM97 183h6v3h-6zM104 183h11v3h-11zM117 183h12v3h-12zM130 183h8v3h-8zM139 183h7v3h-7zM24 187h10v2h-10zM35 187h10v2h-10zM46 187h6v2h-6zM53 187h11v2h-11zM65 187h5v2h-5zM71 187h8v2h-8zM80 187h4v2h-4zM85 187h9v2h-9zM95 187h10v2h-10zM106 187h9v2h-9zM116 187h11v2h-11zM128 187h5v2h-5zM134 187h5v2h-5zM141 187h6v2h-6zM24 190h10v2h-10zM35 190h11v2h-11zM48 190h7v2h-7zM57 190h3v2h-3zM61 190h6v2h-6zM68 190h11v2h-11zM80 190h12v2h-12zM93 190h10v2h-10zM105 190h11v2h-11zM118 190h12v2h-12zM131 190h11v2h-11zM143 190h4v2h-4zM24 193h10v3h-10zM35 193h9v3h-9zM45 193h12v3h-12zM58 193h7v3h-7zM66 193h11v3h-11zM79 193h11v3h-11zM92 193h3v3h-3zM96 193h10v3h-10zM107 193h8v3h-8zM117 193h12v3h-12zM130 193h12v3h-12zM143 193h4v3h-4zM33 200h11v2h-11zM46 200h11v2h-11zM59 200h7v2h-7zM33 203h8v3h-8zM42 203h9v3h-9zM53 203h3v3h-3z" fill="url(#dt)"/>
</g>
<g transform="translate(26,1377)">
<rect x="2" y="2" width="160" height="225" fill="#000"/>
<rect x="0.5" y="0.5" width="158" height="223" fill="#fff" stroke="#000" stroke-width="1"/>
<rect x="0" y="207" width="24" height="1" fill="#000"/><rect x="147" y="207" width="12" height="1" fill="#000"/>
<path d="M23 16.5H148M23 207.5H148M23.5 16V208M147.5 16V208" fill="none" stroke="#000" stroke-width="1" stroke-dasharray="1 1"/>
<path d="M33 17h9v2h-9zM44 17h11v2h-11zM57 17h7v2h-7zM65 17h4v2h-4zM70 17h8v2h-8zM79 17h11v2h-11zM91 17h4v2h-4zM33 20h12v2h-12zM46 20h8v2h-8zM55 20h10v2h-10zM66 20h11v2h-11zM79 20h1v2h-1zM33 23h11v3h-11zM46 23h9v3h-9zM56 23h7v3h-7zM64 23h5v3h-5zM33 27h4v2h-4zM38 27h9v2h-9zM24 33h7v3h-7zM32 33h4v3h-4zM37 33h11v3h-11zM49 33h7v3h-7zM57 33h7v3h-7zM65 33h12v3h-12zM78 33h3v3h-3zM83 33h11v3h-11zM95 33h9v3h-9zM105 33h9v3h-9zM116 33h4v3h-4zM121 33h3v3h-3zM126 33h3v3h-3zM131 33h4v3h-4zM137 33h10v3h-10zM24 37h5v2h-5zM31 37h12v2h-12zM44 37h8v2h-8zM53 37h5v2h-5zM59 37h12v2h-12zM73 37h7v2h-7zM82 37h11v2h-11zM94 37h12v2h-12zM107 37h9v2h-9zM118 37h12v2h-12zM132 37h10v2h-10zM143 37h4v2h-4zM24 40h10v2h-10zM35 40h4v2h-4zM40 40h3v2h-3zM45 40h4v2h-4zM50 40h12v2h-12zM63 40h11v2h-11zM75 40h10v2h-10zM87 40h6v2h-6zM94 40h8v2h-8zM103 40h11v2h-11zM115 40h5v2h-5zM121 40h10v2h-10zM132 40h10v2h-10zM143 40h4v2h-4zM24 43h7v3h-7zM32 43h12v3h-12zM45 43h3v3h-3zM50 43h6v3h-6zM57 43h6v3h-6zM64 43h3v3h-3zM33 47h10v2h-10zM44 47h8v2h-8zM53 47h3v2h-3zM57 47h7v2h-7zM65 47h8v2h-8zM75 47h11v2h-11zM87 47h6v2h-6zM94 47h3v2h-3zM98 47h10v2h-10zM109 47h5v2h-5zM115 47h11v2h-11zM127 47h12v2h-12zM141 47h5v2h-5zM24 50h4v2h-4zM29 50h4v2h-4zM34 50h4v2h-4zM39 50h7v2h-7zM47 50h9v2h-9zM57 50h6v2h-6zM65 50h12v2h-12zM78 50h11v2h-11zM90 50h12v2h-12zM103 50h4v2h-4zM108 50h6v2h-6zM115 50h11v2h-11zM128 50h10v2h-10zM139 50h8v2h-8zM24 53h7v3h-7zM32 53h12v3h-12zM45 53h10v3h-10zM56 53h9v3h-9zM66 53h11v3h-11zM78 53h6v3h-6zM85 53h10v3h-10zM96 53h5v3h-5zM102 53h5v3h-5zM109 53h11v3h-11zM122 53h4v3h-4zM127 53h10v3h-10zM138 53h6v3h-6zM145 53h2v3h-2zM24 57h10v2h-10zM35 57h11v2h-11zM47 57h9v2h-9zM58 57h4v2h-4zM63 57h6v2h-6zM33 60h7v2h-7zM41 60h6v2h-6zM48 60h6v2h-6zM56 60h8v2h-8zM65 60h7v2h-7zM74 60h4v2h-4zM80 60h7v2h-7zM88 60h7v2h-7zM96 60h11v2h-11zM108 60h12v2h-12zM121 60h10v2h-10zM133 60h10v2h-10zM145 60h2v2h-2z" fill="url(#dt)"/>
</g>
<!-- grammar squiggle -->
<path d="M1192.3 662.2 l2 2.6 l2 -2.6 l2 2.6 l2 -2.6 l2 2.6 l2 -2.6 l2 2.6 l2 -2.6 l1.6 1.4" fill="none" stroke="#0a8a0a" stroke-width="1.1"/>
</svg>
<div class="ln" style="top:36.60px"><span style="left:969.4px">и </span><span style="left:1006.0px">тут </span><span style="left:1077.7px">же </span><span style="left:1138.9px">в </span><span style="left:1173.5px">яркий </span><span style="left:1291.1px">солнечный </span><span style="left:1490.6px">день</span></div>
<div class="ln" style="top:81.74px"><span style="left:969.4px">головой </span><span style="left:1123.0px">зарываешься </span><span style="left:1360.2px">в </span><span style="left:1399.4px">солёную</span></div>
<div class="ln" style="top:126.88px"><span style="left:969.4px">происходит, </span><span style="left:1184.9px">деморализует </span><span style="left:1423.9px">изрядно.</span></div>
<div class="ln" style="top:172.02px"><span style="left:1095.8px">Вот </span><span style="left:1168.6px">и </span><span style="left:1198.7px">завалился, </span><span style="left:1384.5px">потерявши</span></div>
<div class="ln" style="top:217.16px"><span style="left:1095.8px">Но </span><span style="left:1154.6px">он </span><span style="left:1206.9px">не </span><span style="left:1257.5px">из </span><span style="left:1304.6px">тех </span><span style="left:1371.8px">людей, </span><span style="left:1501.0px">кото</span></div>
<div class="ln" style="top:262.30px"><span style="left:969.4px">какие </span><span style="left:1075.3px">такие </span><span style="left:1178.7px">грехи </span><span style="left:1285.1px">влипли </span><span style="left:1418.1px">во </span><span style="left:1469.6px">что-то</span></div>
<div class="ln" style="top:307.44px"><span style="left:969.3px">действия </span><span style="left:1135.0px">прежде </span><span style="left:1273.9px">чем </span><span style="left:1351.3px">ситуация </span><span style="left:1520.0px">примет</span></div>
<div class="ln" style="top:352.58px"><span style="left:968.9px">лавировать </span><span style="left:1178.1px">меж </span><span style="left:1270.2px">двух </span><span style="left:1371.5px">крайностей</span></div>
<div class="ln" style="top:397.72px"><span style="left:969.4px">поступков.</span></div>
<div class="ln" style="top:442.86px"><span style="left:1095.8px">Правда, </span><span style="left:1237.9px">надо </span><span style="left:1326.8px">признать, </span><span style="left:1500.7px">что</span></div>
<div class="ln" style="top:488.00px"><span style="left:969.4px">изменять </span><span style="left:1130.3px">своему </span><span style="left:1258.6px">обыкновению.</span></div>
<div class="ln" style="top:533.14px"><span style="left:1096.8px">Тут </span><span style="left:1166.7px">ведь </span><span style="left:1250.6px">такое </span><span style="left:1350.1px">происходит</span></div>
<div class="ln" style="top:578.28px"><span style="left:1095.8px">Ну </span><span style="left:1152.4px">а </span><span style="left:1181.2px">как </span><span style="left:1245.8px">не </span><span style="left:1295.2px">впасть, </span><span style="left:1424.5px">если </span><span style="left:1509.4px">тебя</span></div>
<div class="ln" style="top:623.42px"><span style="left:969.4px">ни </span><span style="left:1020.2px">с </span><span style="left:1050.7px">того, </span><span style="left:1139.9px">ни </span><span style="left:1191.1px">с </span><span style="left:1219.7px">сего </span><span style="left:1300.6px">выдирают </span><span style="left:1479.3px">непо</span></div>
<div class="ln" style="top:668.56px"><span style="left:969.6px">затем </span><span style="left:1073.9px">в </span><span style="left:1102.6px">светящуюся </span><span style="left:1317.7px">со </span><span style="left:1366.3px">всех </span><span style="left:1450.9px">сторон</span></div>
<div class="ln" style="top:758.84px"><span style="left:1329.9px">но </span><span style="left:1392.7px">так. </span><span style="left:1479.3px">Тропа</span></div>
<div class="ln" style="top:803.98px"><span style="left:1326.9px">взгляда.</span></div>
<div class="ln" style="top:849.12px"><span style="left:1321.6px">ником </span><span style="left:1458.2px">поднял</span></div>
<div class="ln" style="top:894.26px"><span style="left:1311.9px">мелкими </span><span style="left:1469.1px">кустами</span></div>
<div class="ln" style="top:939.40px"><span style="left:1312.5px">ые </span><span style="left:1370.0px">пальмы </span><span style="left:1511.4px">и</span></div>
<div class="ln" style="top:984.54px"><span style="left:1321.0px">меж </span><span style="left:1411.3px">которыми</span></div>
<div class="ln" style="top:1029.68px"><span style="left:1349.6px">заводь </span><span style="left:1474.1px">с </span><span style="left:1511.4px">чистой</span></div>
<div class="ln" style="top:1074.82px"><span style="left:1349.7px">ритмично </span><span style="left:1523.7px">по</span></div>
<div class="ln" style="top:1119.96px"><span style="left:1327.1px">нник </span><span style="left:1423.2px">парой </span><span style="left:1535.9px">м</span></div>
<div class="ln" style="top:1165.10px"><span style="left:969.4px">камень, </span><span style="left:1105.9px">а </span><span style="left:1133.3px">это </span><span style="left:1197.7px">чревато. </span><span style="left:1348.1px">Дело </span><span style="left:1442.3px">в </span><span style="left:1472.6px">том,</span></div>
<div class="ln" style="top:1210.24px"><span style="left:969.4px">А </span><span style="left:1006.5px">это, </span><span style="left:1080.2px">в </span><span style="left:1108.6px">том </span><span style="left:1180.6px">числе, </span><span style="left:1295.2px">морские </span><span style="left:1445.1px">жёлуди</span></div>
<div class="ln" style="top:1255.38px"><span style="left:969.4px">на </span><span style="left:1028.8px">любой </span><span style="left:1160.2px">подходящей </span><span style="left:1388.6px">поверхности</span></div>
<div class="ln" style="top:1300.52px"><span style="left:969.4px">приложишься.</span></div>
<div class="ln" style="top:1345.66px"><span style="left:1096.0px">Что </span><span style="left:1177.9px">располагается </span><span style="left:1434.1px">за </span><span style="left:1488.1px">камнем</span></div>
<div class="ln" style="top:1390.80px"><span style="left:969.4px">выяснять. </span><span style="left:1146.0px">Для </span><span style="left:1224.6px">начала </span><span style="left:1348.4px">осмотрел </span><span style="left:1515.6px">себя</span></div>
<div id="dlg" class="abs">
<div class="title"><span>Статистика</span></div>
<svg width="514" height="455" viewBox="0 0 514 455"><path d="M468 13.2 L487.4 32.6 M487.4 13.2 L468 32.6" stroke="#000" stroke-width="1.9" fill="none"/></svg>
<div class="grp">Статистика:</div>
<div class="sep"></div>
<div class="row" style="top:98.6px">Страниц<i>123</i></div>
<div class="row" style="top:129.8px">Слов<i>64 964</i></div>
<div class="row" style="top:161px">Знаков (без пробелов)<i>373 676</i></div>
<div class="row" style="top:192.5px">Знаков (с пробелами)<i>435 834</i></div>
<div class="row" style="top:223.7px">Абзацев<i>2 817</i></div>
<div class="row" style="top:254.6px">Строк<i>6 898</i></div>
<div class="cb"></div>
<div class="cbl"><u>У</u>читывать все сноски</div>
<div class="btn b1">Па<u>н</u>ель</div>
<div class="btn b2">Отмена</div>
</div>
</body>
</html>
